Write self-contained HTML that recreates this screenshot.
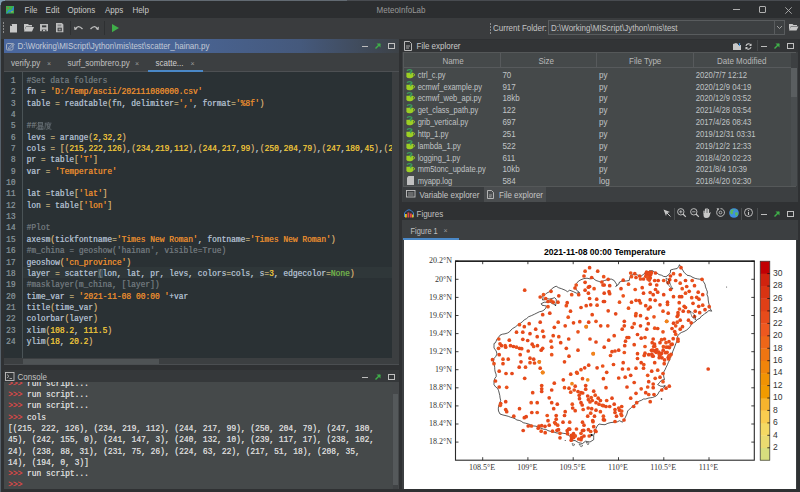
<!DOCTYPE html><html><head><meta charset="utf-8"><style>
*{margin:0;padding:0;box-sizing:border-box}
html,body{width:800px;height:492px;overflow:hidden;background:#2f3133;font-family:"Liberation Sans",sans-serif;position:relative}
.a{position:absolute}
.t{position:absolute;white-space:pre;font-family:"Liberation Sans",sans-serif;font-size:8px;line-height:10px;color:#bbbbbb;transform:translateY(0.8px) scaleY(1.12);transform-origin:0 60%}
.m{position:absolute;white-space:pre;font-family:"Liberation Mono",monospace;font-size:7.93px;line-height:11.36px;color:#a9b7c6;transform:scaleY(1.18);transform-origin:0 50%;text-shadow:0.2px 0 0 currentColor}
.k{color:#a9b7c6}.s{color:#e0892f}.n{color:#e3bf3a}.c{color:#6c7479}.g{color:#6fae4a}.o{color:#c2ad78}.p{color:#c6a46c}
.r{color:#d04848;text-shadow:0.3px 0 0 currentColor}
svg{position:absolute;overflow:visible}
</style></head><body>
<div class="a" style="left:0px;top:0px;width:347px;height:1px;background:#626a72;"></div>
<div class="a" style="left:347px;top:0px;width:453px;height:1px;background:#484b50;"></div>
<div class="a" style="left:0px;top:1px;width:1px;height:491px;background:#56616b;"></div>
<div class="a" style="left:0px;top:0px;width:5px;height:5px;background:#7f9cb4;"></div>
<div class="a" style="left:1px;top:1px;width:799px;height:17px;background:#2c2e30;border-top-left-radius:3px"></div>
<svg style="left:6px;top:6px" width="8" height="7.5" viewBox="0 0 8 7.5"><rect x="0" y="0" width="8" height="7.5" fill="#3cb04a"/><path d="M0 7.5L3 3.5L5 4.5L8 0V3L5.5 6.5L3.2 5.5L1.5 7.5Z" fill="#2f86d2"/><circle cx="2" cy="2" r="0.8" fill="#d84a3a"/><circle cx="6" cy="5.8" r="0.7" fill="#e0c030"/></svg>
<div class="t" style="left:24.6px;top:5px;color:#c9c9c9;font-size:8px;">File</div>
<div class="t" style="left:45.6px;top:5px;color:#c9c9c9;font-size:8px;">Edit</div>
<div class="t" style="left:67.6px;top:5px;color:#c9c9c9;font-size:8px;">Options</div>
<div class="t" style="left:105px;top:5px;color:#c9c9c9;font-size:8px;">Apps</div>
<div class="t" style="left:132.4px;top:5px;color:#c9c9c9;font-size:8px;">Help</div>
<div class="t" style="left:376.6px;top:5px;color:#999999;font-size:8px;">MeteoInfoLab</div>
<div class="a" style="left:733px;top:9.2px;width:6.5px;height:0.9px;background:#b0b0b0;"></div>
<div class="a" style="left:759px;top:6px;width:7px;height:7px;border:0.9px solid #b0b0b0;border-radius:1px"></div>
<svg style="left:785px;top:6.5px" width="7" height="7" viewBox="0 0 7 7"><path d="M0.3 0.3L6.7 6.7M6.7 0.3L0.3 6.7" stroke="#b0b0b0" stroke-width="0.9"/></svg>
<div class="a" style="left:1px;top:18px;width:799px;height:21px;background:#3a3c3e;"></div>
<div class="a" style="left:3px;top:22px;width:1px;height:1.5px;background:#8c8c8c;"></div>
<div class="a" style="left:3px;top:25px;width:1px;height:1.5px;background:#8c8c8c;"></div>
<div class="a" style="left:3px;top:28px;width:1px;height:1.5px;background:#8c8c8c;"></div>
<div class="a" style="left:3px;top:31px;width:1px;height:1.5px;background:#8c8c8c;"></div>
<svg style="left:10px;top:23.5px" width="7" height="8.5" viewBox="0 0 7 8.5"><path d="M2 0H7V8.5H0V2Z" fill="#c8c8c8"/><path d="M0 2L2 0V2Z" fill="#3a3c3e"/></svg>
<svg style="left:24px;top:24px" width="10" height="7.5" viewBox="0 0 10 7.5"><path d="M0 0H4L5 1H8V2.5H2L0 7.5Z" fill="#c8c8c8"/><path d="M2 3H10L8 7.5H0Z" fill="#c8c8c8"/></svg>
<svg style="left:40px;top:23.8px" width="8" height="7.2" viewBox="0 0 8 7.2"><rect x="0" y="0" width="8" height="7.2" fill="#bdbdbd"/><rect x="2" y="1.4" width="4.3" height="1.9" fill="#3a3c3e"/><rect x="1.8" y="5.6" width="4.6" height="1.6" fill="#3a3c3e"/><rect x="3" y="5.9" width="2.2" height="1.3" fill="#bdbdbd"/></svg>
<svg style="left:55.8px;top:22.8px" width="7.4" height="9.2" viewBox="0 0 7.4 9.2"><path d="M0 0H5.8L7.4 1.6V9.2H0Z" fill="#bdbdbd"/><rect x="1.6" y="1.4" width="3.6" height="1.9" fill="#8a8c8e"/><rect x="1.6" y="4.7" width="4.2" height="3.6" fill="#3a3c3e"/><rect x="2.6" y="5.6" width="2.2" height="1.8" fill="#9a9a9a"/></svg>
<div class="a" style="left:69.5px;top:21px;width:1px;height:14px;background:#2e3032;"></div>
<svg style="left:74px;top:25px" width="9" height="5" viewBox="0 0 9 5"><path d="M1 4.5Q4 -1 8.5 4" stroke="#bdbdbd" stroke-width="1.3" fill="none"/><path d="M0 1.5L0.5 5L3.5 4Z" fill="#bdbdbd"/></svg>
<svg style="left:90px;top:25px" width="9" height="5" viewBox="0 0 9 5"><path d="M8 4.5Q5 -1 0.5 4" stroke="#bdbdbd" stroke-width="1.3" fill="none"/><path d="M9 1.5L8.5 5L5.5 4Z" fill="#bdbdbd"/></svg>
<div class="a" style="left:104px;top:21px;width:1px;height:14px;background:#2e3032;"></div>
<svg style="left:111.5px;top:23.5px" width="7" height="8.2" viewBox="0 0 7 8.2"><path d="M0 0L7 4.1L0 8.2Z" fill="#3fae49"/></svg>
<div class="a" style="left:490px;top:23px;width:1px;height:1.5px;background:#8c8c8c;"></div>
<div class="a" style="left:490px;top:26px;width:1px;height:1.5px;background:#8c8c8c;"></div>
<div class="a" style="left:490px;top:29px;width:1px;height:1.5px;background:#8c8c8c;"></div>
<div class="a" style="left:490px;top:32px;width:1px;height:1.5px;background:#8c8c8c;"></div>
<div class="t" style="left:493px;top:22.5px;color:#c4c4c4;font-size:8px;">Current Folder:</div>
<div class="a" style="left:547.5px;top:20px;width:237px;height:14.5px;border:1px solid #595c5e;background:#3d4042"></div>
<div class="t" style="left:551px;top:22.5px;color:#c4c4c4;font-size:8px;">D:\Working\MIScript\Jython\mis\test</div>
<div class="a" style="left:773.5px;top:21px;width:1px;height:12.5px;background:#595c5e;"></div>
<svg style="left:776.5px;top:25.5px" width="5" height="3" viewBox="0 0 5 3"><path d="M0 0L2.5 2.5L5 0" stroke="#aaaaaa" stroke-width="0.9" fill="none"/></svg>
<svg style="left:788.5px;top:24px" width="9.5" height="6.5" viewBox="0 0 9.5 6.5"><path d="M0 0H3.5L4.5 1H8V2H2L0 6.5Z" fill="#c8c8c8"/><path d="M2 2.5H9.5L7.5 6.5H0Z" fill="#c8c8c8"/></svg>
<div class="a" style="left:4px;top:39px;width:394.6px;height:326px;background:#3c3f41;"></div>
<div class="a" style="left:4px;top:39px;width:394.6px;height:13.5px;background:linear-gradient(90deg,#4a679e 0%,#4a6698 40%,#45597c 75%,#3d4247 100%)"></div>
<svg style="left:5.6px;top:41.6px" width="8" height="8" viewBox="0 0 8 8"><rect x="0.5" y="1.5" width="6.5" height="6.5" rx="1.2" fill="none" stroke="#aeb6c2" stroke-width="0.9"/><path d="M2.5 5.8L7 1.2L8.2 2.4L3.7 6.9H2.5Z" fill="none" stroke="#aeb6c2" stroke-width="0.8"/></svg>
<div class="t" style="left:17.5px;top:41px;color:#c3cad6;font-size:8px;">D:\Working\MIScript\Jython\mis\test\scatter_hainan.py</div>
<div class="a" style="left:362px;top:46px;width:6px;height:1px;background:#bdbdbd;"></div>
<svg style="left:375px;top:43px" width="6" height="6" viewBox="0 0 6 6"><path d="M0.5 5.5L5 1" stroke="#3fae49" stroke-width="1.4"/><path d="M1.5 0.5H5.5V4.5Z" fill="#3fae49"/></svg>
<div class="a" style="left:388px;top:43.2px;width:6.6px;height:6px;border:0.9px solid #c0c0c0"></div>
<div class="a" style="left:4px;top:52.5px;width:394.6px;height:19.5px;background:#3c3f41;"></div>
<div class="t" style="left:11px;top:57.5px;color:#c0c0c0;font-size:8px;">verify.py</div>
<div class="t" style="left:47px;top:57.5px;color:#9a9a9a;font-size:7px;">×</div>
<div class="t" style="left:67.5px;top:57.5px;color:#c0c0c0;font-size:8px;">surf_sombrero.py</div>
<div class="t" style="left:135px;top:57.5px;color:#9a9a9a;font-size:7px;">×</div>
<div class="a" style="left:148px;top:52.5px;width:55px;height:19.5px;background:#3c3f41;"></div>
<div class="t" style="left:155.5px;top:57.5px;color:#d0d0d0;font-size:8px;">scatte...</div>
<div class="t" style="left:190.5px;top:57.5px;color:#9a9a9a;font-size:7px;">×</div>
<div class="a" style="left:4px;top:71px;width:394.6px;height:1px;background:#4d5053;"></div>
<div class="a" style="left:148px;top:70px;width:55px;height:2px;background:#4a88c7;"></div>
<div class="a" style="left:4px;top:72px;width:388px;height:286px;background:#2a3134;"></div>
<div class="a" style="left:4px;top:72px;width:18.4px;height:286px;background:#2a3134;"></div>
<div class="a" style="left:22px;top:72px;width:1px;height:286px;background:#4a5356;"></div>
<div class="a" style="left:23px;top:266.82px;width:369px;height:11.059999999999999px;background:#2f3739;"></div>
<div class="m" style="left:0;width:15.5px;text-align:right;top:74.80px;color:#7f8b91">1</div>
<div class="m" style="left:26.5px;top:74.80px"><span class="c">#Set data folders</span></div>
<div class="m" style="left:0;width:15.5px;text-align:right;top:86.16px;color:#7f8b91">2</div>
<div class="m" style="left:26.5px;top:86.16px"><span class="k">fn </span><span class="o">=</span><span class="k"> </span><span class="s">'D:/Temp/ascii/202111080000.csv'</span></div>
<div class="m" style="left:0;width:15.5px;text-align:right;top:97.52px;color:#7f8b91">3</div>
<div class="m" style="left:26.5px;top:97.52px"><span class="k">table </span><span class="o">=</span><span class="k"> readtable</span><span class="p">(</span><span class="k">fn, delimiter</span><span class="o">=</span><span class="s">','</span><span class="k">, format</span><span class="o">=</span><span class="s">'%8f'</span><span class="p">)</span></div>
<div class="m" style="left:0;width:15.5px;text-align:right;top:108.88px;color:#7f8b91">4</div>
<div class="m" style="left:26.5px;top:108.88px"></div>
<div class="m" style="left:0;width:15.5px;text-align:right;top:120.24px;color:#7f8b91">5</div>
<div class="m" style="left:26.5px;top:120.24px"><span class="c">##</span></div>
<div class="m" style="left:0;width:15.5px;text-align:right;top:131.60px;color:#7f8b91">6</div>
<div class="m" style="left:26.5px;top:131.60px"><span class="k">levs </span><span class="o">=</span><span class="k"> arange</span><span class="p">(</span><span class="n">2</span><span class="k">,</span><span class="n">32</span><span class="k">,</span><span class="n">2</span><span class="p">)</span></div>
<div class="m" style="left:0;width:15.5px;text-align:right;top:142.96px;color:#7f8b91">7</div>
<div class="m" style="left:26.5px;top:142.96px"><span class="k">cols </span><span class="o">=</span><span class="k"> </span><span class="p">[</span><span class="p">(</span><span class="n">215</span><span class="k">,</span><span class="n">222</span><span class="k">,</span><span class="n">126</span><span class="p">)</span><span class="k">,</span><span class="p">(</span><span class="n">234</span><span class="k">,</span><span class="n">219</span><span class="k">,</span><span class="n">112</span><span class="p">)</span><span class="k">,</span><span class="p">(</span><span class="n">244</span><span class="k">,</span><span class="n">217</span><span class="k">,</span><span class="n">99</span><span class="p">)</span><span class="k">,</span><span class="p">(</span><span class="n">250</span><span class="k">,</span><span class="n">204</span><span class="k">,</span><span class="n">79</span><span class="p">)</span><span class="k">,</span><span class="p">(</span><span class="n">247</span><span class="k">,</span><span class="n">180</span><span class="k">,</span><span class="n">45</span><span class="p">)</span><span class="k">,</span><span class="p">(</span><span class="n">2</span></div>
<div class="m" style="left:0;width:15.5px;text-align:right;top:154.32px;color:#7f8b91">8</div>
<div class="m" style="left:26.5px;top:154.32px"><span class="k">pr </span><span class="o">=</span><span class="k"> table</span><span class="p">[</span><span class="s">'T'</span><span class="p">]</span></div>
<div class="m" style="left:0;width:15.5px;text-align:right;top:165.68px;color:#7f8b91">9</div>
<div class="m" style="left:26.5px;top:165.68px"><span class="k">var </span><span class="o">=</span><span class="k"> </span><span class="s">'Temperature'</span></div>
<div class="m" style="left:0;width:15.5px;text-align:right;top:177.04px;color:#7f8b91">10</div>
<div class="m" style="left:26.5px;top:177.04px"></div>
<div class="m" style="left:0;width:15.5px;text-align:right;top:188.40px;color:#7f8b91">11</div>
<div class="m" style="left:26.5px;top:188.40px"><span class="k">lat </span><span class="o">=</span><span class="k">table</span><span class="p">[</span><span class="s">'lat'</span><span class="p">]</span></div>
<div class="m" style="left:0;width:15.5px;text-align:right;top:199.76px;color:#7f8b91">12</div>
<div class="m" style="left:26.5px;top:199.76px"><span class="k">lon </span><span class="o">=</span><span class="k"> table</span><span class="p">[</span><span class="s">'lon'</span><span class="p">]</span></div>
<div class="m" style="left:0;width:15.5px;text-align:right;top:211.12px;color:#7f8b91">13</div>
<div class="m" style="left:26.5px;top:211.12px"></div>
<div class="m" style="left:0;width:15.5px;text-align:right;top:222.48px;color:#7f8b91">14</div>
<div class="m" style="left:26.5px;top:222.48px"><span class="c">#Plot</span></div>
<div class="m" style="left:0;width:15.5px;text-align:right;top:233.84px;color:#7f8b91">15</div>
<div class="m" style="left:26.5px;top:233.84px"><span class="k">axesm</span><span class="p">(</span><span class="k">tickfontname</span><span class="o">=</span><span class="s">'Times New Roman'</span><span class="k">, fontname</span><span class="o">=</span><span class="s">'Times New Roman'</span><span class="p">)</span></div>
<div class="m" style="left:0;width:15.5px;text-align:right;top:245.20px;color:#7f8b91">16</div>
<div class="m" style="left:26.5px;top:245.20px"><span class="c">#m_china = geoshow('hainan', visible=True)</span></div>
<div class="m" style="left:0;width:15.5px;text-align:right;top:256.56px;color:#7f8b91">17</div>
<div class="m" style="left:26.5px;top:256.56px"><span class="k">geoshow</span><span class="p">(</span><span class="s">'cn_province'</span><span class="p">)</span></div>
<div class="m" style="left:0;width:15.5px;text-align:right;top:267.92px;color:#7f8b91">18</div>
<div class="m" style="left:26.5px;top:267.92px"><span class="k">layer </span><span class="o">=</span><span class="k"> scatter</span><span class="p">(</span><span class="k">lon, lat, pr, levs, colors</span><span class="o">=</span><span class="k">cols, s</span><span class="o">=</span><span class="n">3</span><span class="k">, edgecolor</span><span class="o">=</span><span class="g">None</span><span class="p">)</span></div>
<div class="m" style="left:0;width:15.5px;text-align:right;top:279.28px;color:#7f8b91">19</div>
<div class="m" style="left:26.5px;top:279.28px"><span class="c">#masklayer(m_china, [layer])</span></div>
<div class="m" style="left:0;width:15.5px;text-align:right;top:290.64px;color:#7f8b91">20</div>
<div class="m" style="left:26.5px;top:290.64px"><span class="k">time_var </span><span class="o">=</span><span class="k"> </span><span class="s">'2021-11-08 00:00 '</span><span class="k">+var</span></div>
<div class="m" style="left:0;width:15.5px;text-align:right;top:302.00px;color:#7f8b91">21</div>
<div class="m" style="left:26.5px;top:302.00px"><span class="k">title</span><span class="p">(</span><span class="k">time_var</span><span class="p">)</span></div>
<div class="m" style="left:0;width:15.5px;text-align:right;top:313.36px;color:#7f8b91">22</div>
<div class="m" style="left:26.5px;top:313.36px"><span class="k">colorbar</span><span class="p">(</span><span class="k">layer</span><span class="p">)</span></div>
<div class="m" style="left:0;width:15.5px;text-align:right;top:324.72px;color:#7f8b91">23</div>
<div class="m" style="left:26.5px;top:324.72px"><span class="k">xlim</span><span class="p">(</span><span class="n">108.2</span><span class="k">, </span><span class="n">111.5</span><span class="p">)</span></div>
<div class="m" style="left:0;width:15.5px;text-align:right;top:336.08px;color:#7f8b91">24</div>
<div class="m" style="left:26.5px;top:336.08px"><span class="k">ylim</span><span class="p">(</span><span class="n">18</span><span class="k">, </span><span class="n">20.2</span><span class="p">)</span></div>
<div class="a" style="left:98px;top:269.42px;width:4.5px;height:8.5px;background:#4a6a80;opacity:0.55"></div>
<svg style="left:36px;top:121.5px" width="16" height="7.5" viewBox="0 0 16 7.5"><g stroke="#6a7378" stroke-width="0.75" fill="none"><path d="M0.4 0.6L1.4 1.4M0.2 2.9L1.2 3.6M0.3 7.2L1.4 5"/><rect x="2.6" y="0.4" width="4" height="2.9"/><path d="M2.6 1.85H6.6"/><rect x="2.2" y="4.2" width="4.8" height="2.9"/><path d="M3.8 4.2V7.1M5.4 4.2V7.1M1.6 7.2H7.4"/><path d="M12.3 0V1M8.8 1.2H15.5M9.4 1.2Q9.4 5.5 8.6 7.4M10.2 2.8H15M11.3 2V4.3H13.9V2M10.8 5.1H14.2Q13 7 9.8 7.4M11.3 5.6Q13 7 15.4 7.4"/></g></svg>
<div class="a" style="left:392px;top:72px;width:6.6px;height:286px;background:#3c3f41;"></div>
<div class="a" style="left:4px;top:358px;width:394.6px;height:6.5px;background:#3c3f41;"></div>
<div class="a" style="left:22.5px;top:358.5px;width:136.5px;height:5px;background:#4f5355;"></div>
<div class="a" style="left:4px;top:364.3px;width:394.6px;height:0.7px;background:#4b4e51;"></div>
<div class="a" style="left:4px;top:369.6px;width:394.6px;height:119.6px;background:#45494a;"></div>
<div class="a" style="left:4px;top:369.6px;width:394.6px;height:12.8px;background:#35383a;"></div>
<svg style="left:5px;top:372px" width="9.5" height="9" viewBox="0 0 9.5 9"><rect x="0.5" y="0.5" width="8.5" height="8" fill="none" stroke="#bfbfbf" stroke-width="0.9"/><path d="M2 2.5L4 4.3L2 6" stroke="#bfbfbf" stroke-width="0.8" fill="none"/><path d="M4.5 6.5H7" stroke="#bfbfbf" stroke-width="0.8"/></svg>
<div class="t" style="left:17.5px;top:372px;color:#c2c2c2;font-size:8px;">Console</div>
<div class="a" style="left:362px;top:376.5px;width:6px;height:1px;background:#bdbdbd;"></div>
<svg style="left:375px;top:373.5px" width="6" height="6" viewBox="0 0 6 6"><path d="M0.5 5.5L5 1" stroke="#3fae49" stroke-width="1.4"/><path d="M1.5 0.5H5.5V4.5Z" fill="#3fae49"/></svg>
<div class="a" style="left:388px;top:373.7px;width:6.6px;height:6px;border:0.9px solid #c0c0c0"></div>
<div class="a" style="left:392px;top:382.4px;width:6.6px;height:106.6px;background:#45484a;"></div>
<div class="a" style="left:392.6px;top:394.3px;width:5.4px;height:90.7px;background:#55595b;"></div>
<div class="a" style="left:392.6px;top:485px;width:5.4px;height:3.8px;background:#404345;"></div>
<div class="a" style="left:4px;top:382.4px;width:388px;height:106.6px;overflow:hidden">
<div class="m" style="left:3.9px;top:-4.60px"><span class="r">&gt;&gt;&gt; </span><span style="color:#d4d4d4">run script...</span></div>
<div class="m" style="left:3.9px;top:6.70px"><span class="r">&gt;&gt;&gt; </span><span style="color:#d4d4d4">run script...</span></div>
<div class="m" style="left:3.9px;top:18.00px"><span class="r">&gt;&gt;&gt; </span><span style="color:#d4d4d4">run script...</span></div>
<div class="m" style="left:3.9px;top:29.30px"><span class="r">&gt;&gt;&gt; </span><span style="color:#d4d4d4">cols</span></div>
<div class="m" style="left:3.9px;top:40.60px"><span style="color:#d4d4d4">[(215, 222, 126), (234, 219, 112), (244, 217, 99), (250, 204, 79), (247, 180,</span></div>
<div class="m" style="left:3.9px;top:51.90px"><span style="color:#d4d4d4">45), (242, 155, 0), (241, 147, 3), (240, 132, 10), (239, 117, 17), (238, 102,</span></div>
<div class="m" style="left:3.9px;top:63.20px"><span style="color:#d4d4d4">24), (238, 88, 31), (231, 75, 26), (224, 63, 22), (217, 51, 18), (208, 35,</span></div>
<div class="m" style="left:3.9px;top:74.50px"><span style="color:#d4d4d4">14), (194, 0, 3)]</span></div>
<div class="m" style="left:3.9px;top:85.80px"><span class="r">&gt;&gt;&gt; </span><span style="color:#d4d4d4">run script...</span></div>
<div class="m" style="left:3.9px;top:97.10px"><span class="r">&gt;&gt;&gt; </span><span style="color:#d4d4d4"></span></div>
</div>
<div class="a" style="left:402px;top:39.5px;width:395.6px;height:162.5px;background:#3c3f41;"></div>
<div class="a" style="left:402px;top:39.5px;width:395.6px;height:12.4px;background:#323436;"></div>
<svg style="left:404px;top:41px" width="8" height="10" viewBox="0 0 8 10"><path d="M0.5 0.5H5.5L7.5 2.5V9.5H0.5Z" fill="none" stroke="#c8c8c8" stroke-width="0.9"/><path d="M2 5H6M2 7H5" stroke="#c8c8c8" stroke-width="0.8"/></svg>
<div class="t" style="left:416.5px;top:41px;color:#c8c8c8;font-size:8px;">File explorer</div>
<svg style="left:733px;top:43px" width="8" height="7" viewBox="0 0 8 7"><path d="M0 1L3 0L5 1V7H0Z" fill="#c8c8c8"/><rect x="5" y="2" width="3" height="5" fill="#c8c8c8"/><path d="M6.5 0V3" stroke="#3a8ad0" stroke-width="1.2"/></svg>
<svg style="left:745px;top:43px" width="7" height="7" viewBox="0 0 7 7"><path d="M1 3A2.7 2.7 0 0 1 6 2.2M6 4A2.7 2.7 0 0 1 1 4.8" stroke="#c8c8c8" stroke-width="1.1" fill="none"/><path d="M6.5 0.5V3H4Z M0.5 6.5V4H3Z" fill="#c8c8c8"/></svg>
<div class="a" style="left:756.5px;top:40px;width:1px;height:11px;background:#45484a;"></div>
<div class="a" style="left:761px;top:46px;width:6px;height:1px;background:#bdbdbd;"></div>
<svg style="left:774px;top:43px" width="6" height="6" viewBox="0 0 6 6"><path d="M0.5 5.5L5 1" stroke="#3fae49" stroke-width="1.4"/><path d="M1.5 0.5H5.5V4.5Z" fill="#3fae49"/></svg>
<div class="a" style="left:787px;top:43.2px;width:6.6px;height:6px;border:0.9px solid #c0c0c0"></div>
<div class="a" style="left:403.3px;top:51.9px;width:393.2px;height:134.7px;background:#45494a;border:1px solid #555859"></div>
<div class="a" style="left:404px;top:52.5px;width:386.5px;height:14.7px;background:#45494a;"></div>
<div class="a" style="left:404px;top:67.2px;width:386.5px;height:1px;background:#575a5c;"></div>
<div class="a" style="left:499.7px;top:52.5px;width:1px;height:14.7px;background:#575a5c;"></div>
<div class="a" style="left:596.3px;top:52.5px;width:1px;height:14.7px;background:#575a5c;"></div>
<div class="a" style="left:693px;top:52.5px;width:1px;height:14.7px;background:#575a5c;"></div>
<div class="t" style="left:442.4px;top:56px;color:#b8b8b8;font-size:8px;">Name</div>
<div class="t" style="left:538.5px;top:56px;color:#b8b8b8;font-size:8px;">Size</div>
<div class="t" style="left:629px;top:56px;color:#b8b8b8;font-size:8px;">File Type</div>
<div class="t" style="left:717px;top:56px;color:#b8b8b8;font-size:8px;">Date Modified</div>
<div class="a" style="left:790.5px;top:52.5px;width:6px;height:15.3px;background:#3d4042;"></div>
<div class="a" style="left:790.5px;top:67.8px;width:6px;height:118.3px;background:#4a4e50;"></div>
<div class="a" style="left:790.5px;top:67.8px;width:6px;height:29.5px;background:#5a5e60;"></div>
<svg style="left:406.4px;top:68.7px" width="9" height="9.5" viewBox="0 0 9 9.5"><path d="M0.4 3.8H7.1V7.3Q7.1 9.2 4.5 9.2H3Q0.4 9.2 0.4 7.3Z" fill="#9ccf24"/><circle cx="7.4" cy="5.8" r="1.15" fill="none" stroke="#9ccf24" stroke-width="1"/><path d="M0.9 1.6Q3.5 0 5.6 1.2Q6.6 2.6 4 3.3Q5.3 4 4.6 5.2" stroke="#3c9e5c" stroke-width="1.25" fill="none"/></svg>
<div class="t" style="left:417.7px;top:69.7px;color:#c0c4c6;font-size:7.5px;">ctrl_c.py</div>
<div class="t" style="left:502.4px;top:69.7px;color:#c0c4c6;font-size:8px;">70</div>
<div class="t" style="left:599px;top:69.7px;color:#c0c4c6;font-size:8px;">py</div>
<div class="t" style="left:695.8px;top:69.7px;color:#c0c4c6;font-size:7.7px;">2020/7/7 12:12</div>
<svg style="left:406.4px;top:80.54px" width="9" height="9.5" viewBox="0 0 9 9.5"><path d="M0.4 3.8H7.1V7.3Q7.1 9.2 4.5 9.2H3Q0.4 9.2 0.4 7.3Z" fill="#9ccf24"/><circle cx="7.4" cy="5.8" r="1.15" fill="none" stroke="#9ccf24" stroke-width="1"/><path d="M0.9 1.6Q3.5 0 5.6 1.2Q6.6 2.6 4 3.3Q5.3 4 4.6 5.2" stroke="#3c9e5c" stroke-width="1.25" fill="none"/></svg>
<div class="t" style="left:417.7px;top:81.54px;color:#c0c4c6;font-size:7.5px;">ecmwf_example.py</div>
<div class="t" style="left:502.4px;top:81.54px;color:#c0c4c6;font-size:8px;">917</div>
<div class="t" style="left:599px;top:81.54px;color:#c0c4c6;font-size:8px;">py</div>
<div class="t" style="left:695.8px;top:81.54px;color:#c0c4c6;font-size:7.7px;">2020/12/9 04:19</div>
<svg style="left:406.4px;top:92.38px" width="9" height="9.5" viewBox="0 0 9 9.5"><path d="M0.4 3.8H7.1V7.3Q7.1 9.2 4.5 9.2H3Q0.4 9.2 0.4 7.3Z" fill="#9ccf24"/><circle cx="7.4" cy="5.8" r="1.15" fill="none" stroke="#9ccf24" stroke-width="1"/><path d="M0.9 1.6Q3.5 0 5.6 1.2Q6.6 2.6 4 3.3Q5.3 4 4.6 5.2" stroke="#3c9e5c" stroke-width="1.25" fill="none"/></svg>
<div class="t" style="left:417.7px;top:93.38px;color:#c0c4c6;font-size:7.5px;">ecmwf_web_api.py</div>
<div class="t" style="left:502.4px;top:93.38px;color:#c0c4c6;font-size:8px;">18kb</div>
<div class="t" style="left:599px;top:93.38px;color:#c0c4c6;font-size:8px;">py</div>
<div class="t" style="left:695.8px;top:93.38px;color:#c0c4c6;font-size:7.7px;">2020/12/9 03:52</div>
<svg style="left:406.4px;top:104.22px" width="9" height="9.5" viewBox="0 0 9 9.5"><path d="M0.4 3.8H7.1V7.3Q7.1 9.2 4.5 9.2H3Q0.4 9.2 0.4 7.3Z" fill="#9ccf24"/><circle cx="7.4" cy="5.8" r="1.15" fill="none" stroke="#9ccf24" stroke-width="1"/><path d="M0.9 1.6Q3.5 0 5.6 1.2Q6.6 2.6 4 3.3Q5.3 4 4.6 5.2" stroke="#3c9e5c" stroke-width="1.25" fill="none"/></svg>
<div class="t" style="left:417.7px;top:105.22px;color:#c0c4c6;font-size:7.5px;">get_class_path.py</div>
<div class="t" style="left:502.4px;top:105.22px;color:#c0c4c6;font-size:8px;">122</div>
<div class="t" style="left:599px;top:105.22px;color:#c0c4c6;font-size:8px;">py</div>
<div class="t" style="left:695.8px;top:105.22px;color:#c0c4c6;font-size:7.7px;">2021/4/28 03:54</div>
<svg style="left:406.4px;top:116.06px" width="9" height="9.5" viewBox="0 0 9 9.5"><path d="M0.4 3.8H7.1V7.3Q7.1 9.2 4.5 9.2H3Q0.4 9.2 0.4 7.3Z" fill="#9ccf24"/><circle cx="7.4" cy="5.8" r="1.15" fill="none" stroke="#9ccf24" stroke-width="1"/><path d="M0.9 1.6Q3.5 0 5.6 1.2Q6.6 2.6 4 3.3Q5.3 4 4.6 5.2" stroke="#3c9e5c" stroke-width="1.25" fill="none"/></svg>
<div class="t" style="left:417.7px;top:117.06px;color:#c0c4c6;font-size:7.5px;">grib_vertical.py</div>
<div class="t" style="left:502.4px;top:117.06px;color:#c0c4c6;font-size:8px;">697</div>
<div class="t" style="left:599px;top:117.06px;color:#c0c4c6;font-size:8px;">py</div>
<div class="t" style="left:695.8px;top:117.06px;color:#c0c4c6;font-size:7.7px;">2017/4/26 08:43</div>
<svg style="left:406.4px;top:127.9px" width="9" height="9.5" viewBox="0 0 9 9.5"><path d="M0.4 3.8H7.1V7.3Q7.1 9.2 4.5 9.2H3Q0.4 9.2 0.4 7.3Z" fill="#9ccf24"/><circle cx="7.4" cy="5.8" r="1.15" fill="none" stroke="#9ccf24" stroke-width="1"/><path d="M0.9 1.6Q3.5 0 5.6 1.2Q6.6 2.6 4 3.3Q5.3 4 4.6 5.2" stroke="#3c9e5c" stroke-width="1.25" fill="none"/></svg>
<div class="t" style="left:417.7px;top:128.9px;color:#c0c4c6;font-size:7.5px;">http_1.py</div>
<div class="t" style="left:502.4px;top:128.9px;color:#c0c4c6;font-size:8px;">251</div>
<div class="t" style="left:599px;top:128.9px;color:#c0c4c6;font-size:8px;">py</div>
<div class="t" style="left:695.8px;top:128.9px;color:#c0c4c6;font-size:7.7px;">2019/12/31 03:31</div>
<svg style="left:406.4px;top:139.74px" width="9" height="9.5" viewBox="0 0 9 9.5"><path d="M0.4 3.8H7.1V7.3Q7.1 9.2 4.5 9.2H3Q0.4 9.2 0.4 7.3Z" fill="#9ccf24"/><circle cx="7.4" cy="5.8" r="1.15" fill="none" stroke="#9ccf24" stroke-width="1"/><path d="M0.9 1.6Q3.5 0 5.6 1.2Q6.6 2.6 4 3.3Q5.3 4 4.6 5.2" stroke="#3c9e5c" stroke-width="1.25" fill="none"/></svg>
<div class="t" style="left:417.7px;top:140.74px;color:#c0c4c6;font-size:7.5px;">lambda_1.py</div>
<div class="t" style="left:502.4px;top:140.74px;color:#c0c4c6;font-size:8px;">522</div>
<div class="t" style="left:599px;top:140.74px;color:#c0c4c6;font-size:8px;">py</div>
<div class="t" style="left:695.8px;top:140.74px;color:#c0c4c6;font-size:7.7px;">2019/12/2 12:33</div>
<svg style="left:406.4px;top:151.57999999999998px" width="9" height="9.5" viewBox="0 0 9 9.5"><path d="M0.4 3.8H7.1V7.3Q7.1 9.2 4.5 9.2H3Q0.4 9.2 0.4 7.3Z" fill="#9ccf24"/><circle cx="7.4" cy="5.8" r="1.15" fill="none" stroke="#9ccf24" stroke-width="1"/><path d="M0.9 1.6Q3.5 0 5.6 1.2Q6.6 2.6 4 3.3Q5.3 4 4.6 5.2" stroke="#3c9e5c" stroke-width="1.25" fill="none"/></svg>
<div class="t" style="left:417.7px;top:152.57999999999998px;color:#c0c4c6;font-size:7.5px;">logging_1.py</div>
<div class="t" style="left:502.4px;top:152.57999999999998px;color:#c0c4c6;font-size:8px;">611</div>
<div class="t" style="left:599px;top:152.57999999999998px;color:#c0c4c6;font-size:8px;">py</div>
<div class="t" style="left:695.8px;top:152.57999999999998px;color:#c0c4c6;font-size:7.7px;">2018/4/20 02:23</div>
<svg style="left:406.4px;top:163.42000000000002px" width="9" height="9.5" viewBox="0 0 9 9.5"><path d="M0.4 3.8H7.1V7.3Q7.1 9.2 4.5 9.2H3Q0.4 9.2 0.4 7.3Z" fill="#9ccf24"/><circle cx="7.4" cy="5.8" r="1.15" fill="none" stroke="#9ccf24" stroke-width="1"/><path d="M0.9 1.6Q3.5 0 5.6 1.2Q6.6 2.6 4 3.3Q5.3 4 4.6 5.2" stroke="#3c9e5c" stroke-width="1.25" fill="none"/></svg>
<div class="t" style="left:417.7px;top:164.42000000000002px;color:#c0c4c6;font-size:7.5px;">mm5tonc_update.py</div>
<div class="t" style="left:502.4px;top:164.42000000000002px;color:#c0c4c6;font-size:8px;">10kb</div>
<div class="t" style="left:599px;top:164.42000000000002px;color:#c0c4c6;font-size:8px;">py</div>
<div class="t" style="left:695.8px;top:164.42000000000002px;color:#c0c4c6;font-size:7.7px;">2021/8/4 10:39</div>
<svg style="left:407px;top:176.26px" width="7" height="9" viewBox="0 0 7 9"><path d="M1.5 0H7V9H0V1.5Z" fill="#c0c0c0"/></svg>
<div class="t" style="left:417.7px;top:176.26px;color:#c0c4c6;font-size:7.5px;">myapp.log</div>
<div class="t" style="left:502.4px;top:176.26px;color:#c0c4c6;font-size:8px;">584</div>
<div class="t" style="left:599px;top:176.26px;color:#c0c4c6;font-size:8px;">log</div>
<div class="t" style="left:695.8px;top:176.26px;color:#c0c4c6;font-size:7.7px;">2018/4/20 02:30</div>
<div class="a" style="left:403.3px;top:186.6px;width:393.2px;height:15.2px;background:#3c3f41;"></div>
<div class="a" style="left:403.3px;top:186.6px;width:80.6px;height:15.2px;background:#393c3e;"></div>
<div class="a" style="left:484px;top:186.6px;width:62px;height:15.2px;background:#4a4d4f;"></div>
<svg style="left:405.5px;top:190px" width="9.5" height="7.5" viewBox="0 0 9.5 7.5"><rect x="0.5" y="0.5" width="8.5" height="6.5" fill="none" stroke="#c0c0c0" stroke-width="0.9"/><path d="M2 3H7.5M2 5H7.5" stroke="#c0c0c0" stroke-width="0.7"/></svg>
<div class="t" style="left:419.5px;top:190px;color:#c4c4c4;font-size:8px;">Variable explorer</div>
<svg style="left:487px;top:189.5px" width="7" height="9" viewBox="0 0 7 9"><path d="M0.5 0.5H4.5L6.5 2.5V8.5H0.5Z" fill="none" stroke="#c0c0c0" stroke-width="0.9"/><path d="M2 5H5M2 6.8H4.5" stroke="#c0c0c0" stroke-width="0.7"/></svg>
<div class="t" style="left:499px;top:190px;color:#c4c4c4;font-size:8px;">File explorer</div>
<div class="a" style="left:402px;top:206.5px;width:395.6px;height:282.5px;background:#3c3f41;"></div>
<div class="a" style="left:402px;top:206.5px;width:395.6px;height:13.1px;background:#2f3133;"></div>
<svg style="left:404px;top:208.2px" width="10" height="10" viewBox="0 0 10 10"><path d="M0.5 9V5Q5 -1.5 9.5 5V9" stroke="#3a7fd0" stroke-width="1" fill="none"/><rect x="1" y="6" width="1.8" height="3.5" fill="#e8c020"/><rect x="3.5" y="4.5" width="1.8" height="5" fill="#e04848"/><rect x="6" y="5.5" width="1.8" height="4" fill="#e04848"/><rect x="8" y="6.5" width="1.5" height="3" fill="#e8c020"/></svg>
<div class="t" style="left:416.5px;top:209px;color:#c0c0c0;font-size:8px;">Figures</div>
<svg style="left:663px;top:209.2px" width="8" height="8" viewBox="0 0 8 8"><path d="M0.5 0.5L7 3L4 4L3 7Z" fill="#c8c8c8"/><path d="M4 4L7.5 7.5" stroke="#c8c8c8" stroke-width="1"/></svg>
<div class="a" style="left:674px;top:207.7px;width:0.8px;height:12px;background:#4a4d4f;"></div>
<svg style="left:676.5px;top:208.2px" width="9" height="9" viewBox="0 0 9 9"><circle cx="3.8" cy="3.8" r="3.2" fill="none" stroke="#c8c8c8" stroke-width="0.9"/><path d="M6 6L8.8 8.8" stroke="#c8c8c8" stroke-width="1.2"/><path d="M2.2 3.8H5.4" stroke="#c8c8c8" stroke-width="0.8"/><path d="M3.8 2.2V5.4" stroke="#c8c8c8" stroke-width="0.8"/></svg>
<svg style="left:689.5px;top:208.2px" width="9" height="9" viewBox="0 0 9 9"><circle cx="3.8" cy="3.8" r="3.2" fill="none" stroke="#c8c8c8" stroke-width="0.9"/><path d="M6 6L8.8 8.8" stroke="#c8c8c8" stroke-width="1.2"/><path d="M2.2 3.8H5.4" stroke="#c8c8c8" stroke-width="0.8"/></svg>
<svg style="left:703px;top:207.7px" width="8" height="10" viewBox="0 0 8 10"><path d="M1 5V3M2.5 5V1M4 5V0.5M5.5 5V1.5" stroke="#c8c8c8" stroke-width="1.2" stroke-linecap="round"/><path d="M0.5 5H6.5L7.8 4L6.5 8.5Q5.5 10 3 10Q0.5 10 0.5 7Z" fill="#c8c8c8"/></svg>
<svg style="left:716px;top:208.2px" width="9" height="9" viewBox="0 0 9 9"><path d="M2.2 1.4A3.9 3.9 0 1 0 4.5 0.6" stroke="#c8c8c8" stroke-width="0.9" fill="none"/><path d="M0.6 0.2L3.4 0.4L1.8 2.8Z" fill="#c8c8c8"/><circle cx="4.5" cy="4.5" r="1.4" fill="none" stroke="#c8c8c8" stroke-width="0.8"/></svg>
<svg style="left:729px;top:207.7px" width="10" height="10" viewBox="0 0 10 10"><circle cx="5" cy="5" r="4.8" fill="#3f8fe0"/><path d="M1.2 3.2Q2.5 1 4.6 1.3L5 2.6L3.6 3.4L4.2 5L2.8 6.6L1.4 5.6Z" fill="#5cb85c"/><path d="M5.8 4.6L8.6 4.2L8.9 6.5L7.2 8.6L6.4 7Z" fill="#5cb85c"/><path d="M6.3 1.2L7.8 2L6.8 2.6Z" fill="#5cb85c"/></svg>
<div class="a" style="left:741px;top:207.7px;width:0.8px;height:12px;background:#4a4d4f;"></div>
<svg style="left:744px;top:208.2px" width="9" height="9" viewBox="0 0 9 9"><circle cx="4.5" cy="4.5" r="4" fill="none" stroke="#c8c8c8" stroke-width="0.9"/><path d="M4.5 3.8V7" stroke="#c8c8c8" stroke-width="1.1"/><circle cx="4.5" cy="2.3" r="0.6" fill="#c8c8c8"/></svg>
<div class="a" style="left:756.5px;top:207.7px;width:0.8px;height:12px;background:#4a4d4f;"></div>
<div class="a" style="left:761px;top:213.7px;width:6px;height:1px;background:#bdbdbd;"></div>
<svg style="left:774px;top:210.7px" width="6" height="6" viewBox="0 0 6 6"><path d="M0.5 5.5L5 1" stroke="#3fae49" stroke-width="1.4"/><path d="M1.5 0.5H5.5V4.5Z" fill="#3fae49"/></svg>
<div class="a" style="left:787px;top:210.89999999999998px;width:6.6px;height:6px;border:0.9px solid #c0c0c0"></div>
<div class="a" style="left:402px;top:219.6px;width:395.6px;height:20.4px;background:#3c3f41;"></div>
<div class="t" style="left:410.6px;top:225.5px;color:#c0c0c0;font-size:7.4px;">Figure 1</div>
<div class="t" style="left:443.5px;top:225px;color:#9a9a9a;font-size:7px;">×</div>
<div class="a" style="left:403.3px;top:238px;width:55.5px;height:2px;background:#4a88c7;"></div>
<div class="a" style="left:403.8px;top:240px;width:392.7px;height:248.8px;background:#ffffff;"></div>
<div class="a" style="left:796.5px;top:240px;width:1.1px;height:249px;background:#2f3133;"></div>
<svg style="left:0;top:0" width="800" height="492" viewBox="0 0 800 492">
<text x="604.8" y="255.3" text-anchor="middle" font-family="Liberation Sans" font-weight="bold" font-size="8.6" fill="#000">2021-11-08 00:00 Temperature</text>
<path d="M500.0 414.0 L498.5 411.0 L498.3 408.8 L498.5 406.5 L499.6 403.5 L500.7 400.5 L500.1 398.0 L499.8 395.5 L499.2 393.0 L498.6 390.7 L497.7 388.5 L495.6 386.9 L494.0 384.7 L494.0 381.0 L494.7 378.6 L496.2 376.5 L496.1 374.2 L495.2 372.0 L494.8 369.8 L494.7 367.5 L494.4 365.1 L493.2 363.0 L493.6 360.7 L494.0 358.5 L495.8 356.4 L497.0 354.0 L496.2 351.0 L494.0 348.0 L494.0 345.8 L494.0 343.5 L495.5 342.7 L497.0 339.0 L498.6 337.2 L500.0 335.2 L502.4 334.2 L505.0 333.8 L507.5 333.0 L509.5 331.8 L511.0 330.0 L512.7 328.5 L515.5 326.8 L518.0 324.7 L520.3 323.3 L522.5 321.7 L524.3 319.8 L526.6 318.6 L528.5 316.8 L531.5 315.6 L534.5 314.2 L536.9 313.0 L539.3 311.8 L542.0 311.2 L544.1 310.0 L545.7 308.2 L546.5 306.0 L544.2 305.6 L542.0 305.2 L541.2 303.7 L544.2 302.2 L547.1 302.3 L550.0 302.0 L552.2 303.6 L554.7 304.5 L555.5 306.0 L555.9 303.8 L556.3 301.5 L556.2 299.2 L554.7 297.7 L552.0 298.5 L549.6 299.0 L547.2 298.8 L544.9 299.7 L542.5 300.0 L543.0 297.8 L542.7 295.5 L544.9 294.8 L546.5 293.2 L549.5 291.7 L551.4 289.1 L554.0 287.2 L556.2 286.2 L558.5 287.7 L561.5 288.7 L565.2 290.2 L567.5 291.7 L569.7 290.2 L573.5 291.7 L576.5 293.2 L579.5 292.5 L576.5 290.2 L575.0 287.2 L576.5 283.5 L578.4 281.2 L581.0 279.7 L583.9 278.6 L587.0 278.2 L590.0 278.9 L593.0 278.2 L596.0 280.5 L598.2 281.2 L600.4 282.0 L604.5 280.5 L607.5 279.7 L611.2 279.0 L614.2 280.5 L615.6 282.8 L617.2 285.0 L615.7 286.5 L618.7 284.2 L619.5 282.0 L621.7 281.3 L624.0 281.2 L626.6 280.9 L629.2 280.5 L629.8 277.8 L630.7 275.2 L633.3 274.6 L636.0 274.5 L638.6 275.4 L641.2 276.0 L643.2 274.6 L645.0 273.0 L647.5 272.4 L649.5 270.7 L652.5 270.7 L654.6 272.1 L657.0 273.0 L659.0 274.6 L661.5 275.2 L663.6 276.4 L666.0 276.7 L669.0 274.5 L670.4 272.5 L670.5 270.0 L673.5 269.2 L677.2 268.5 L678.6 266.7 L679.5 264.7 L681.7 268.5 L684.0 272.2 L687.0 275.2 L690.2 275.9 L693.0 277.5 L695.2 278.4 L697.4 278.9 L699.7 279.2 L702.0 279.0 L703.4 281.6 L705.0 284.2 L705.5 286.9 L706.5 289.5 L707.4 291.9 L707.0 294.6 L708.0 297.0 L708.2 300.0 L708.7 303.0 L709.3 305.2 L709.5 307.5 L711.7 311.2 L708.7 310.5 L707.2 312.3 L705.0 313.3 L703.4 315.0 L701.3 316.2 L699.9 318.3 L697.7 319.3 L696.0 321.0 L693.8 322.6 L691.5 324.0 L690.3 326.4 L688.5 328.5 L686.4 330.2 L684.0 331.5 L681.6 332.4 L679.5 333.7 L678.1 335.4 L677.2 337.5 L677.3 339.8 L676.5 342.0 L675.3 345.0 L674.2 348.0 L672.7 351.7 L672.0 354.1 L670.5 356.2 L669.7 360.0 L668.4 362.2 L667.5 364.5 L666.0 367.5 L665.0 369.8 L663.7 372.0 L663.6 374.5 L663.8 377.0 L664.5 379.5 L661.5 380.2 L659.6 382.4 L657.7 384.7 L660.7 386.2 L663.0 386.3 L665.2 385.5 L663.0 388.5 L661.2 390.1 L659.2 391.5 L658.0 394.0 L656.2 396.0 L652.5 397.5 L650.2 397.8 L648.0 398.2 L645.8 399.0 L643.5 399.0 L641.4 400.3 L639.0 401.2 L637.2 402.8 L635.2 404.2 L632.9 406.0 L630.7 408.0 L627.7 411.0 L626.9 414.1 L625.5 417.0 L624.0 420.0 L622.5 422.2 L619.5 420.7 L617.4 421.8 L615.0 422.2 L611.0 422.5 L607.9 423.3 L605.0 424.7 L602.0 424.5 L599.0 424.0 L597.2 426.0 L596.0 428.5 L594.9 430.6 L594.6 433.0 L593.7 435.2 L593.7 437.4 L593.7 439.7 L590.0 442.0 L587.8 441.6 L585.5 441.2 L582.5 443.5 L578.7 442.7 L575.0 440.5 L572.7 440.7 L570.5 441.2 L570.6 438.9 L570.5 436.7 L568.3 435.2 L566.0 433.7 L563.8 433.4 L561.5 433.0 L559.3 433.2 L557.0 433.0 L554.7 432.4 L552.6 431.5 L550.2 431.3 L548.0 430.6 L545.9 429.4 L543.5 429.2 L541.0 428.2 L538.5 427.2 L536.0 426.2 L533.3 425.9 L530.7 424.8 L528.1 423.9 L525.5 423.2 L523.2 422.7 L521.3 421.3 L519.2 420.4 L516.9 420.0 L515.0 418.7 L512.8 417.8 L510.5 417.2 L508.3 416.3 L506.0 415.7 L503.0 415.0 L500.0 414.0Z" fill="none" stroke="#000" stroke-width="0.65"/>
<circle cx="524.7" cy="290.2" r="1.85" fill="#e74b1a"/>
<circle cx="589.6" cy="267.7" r="1.85" fill="#e5471a"/>
<circle cx="585.1" cy="271.2" r="1.85" fill="#ea531d"/>
<circle cx="597.7" cy="271.2" r="1.85" fill="#e64a18"/>
<circle cx="584" cy="276" r="1.85" fill="#e74b1a"/>
<circle cx="591.7" cy="277.5" r="1.85" fill="#e5471a"/>
<circle cx="603.7" cy="276.7" r="1.85" fill="#ea531d"/>
<circle cx="585.1" cy="282.3" r="1.85" fill="#e64a18"/>
<circle cx="601.9" cy="282" r="1.85" fill="#e74b1a"/>
<circle cx="604.2" cy="285" r="1.85" fill="#e5471a"/>
<circle cx="576.2" cy="285" r="1.85" fill="#ea531d"/>
<circle cx="575" cy="288" r="1.85" fill="#e64a18"/>
<circle cx="588.4" cy="287.2" r="1.85" fill="#e74b1a"/>
<circle cx="589.6" cy="286.5" r="1.85" fill="#e5471a"/>
<circle cx="594.1" cy="288.7" r="1.85" fill="#ea531d"/>
<circle cx="585.1" cy="290.2" r="1.85" fill="#e64a18"/>
<circle cx="588.4" cy="293.2" r="1.85" fill="#e74b1a"/>
<circle cx="604.2" cy="293.2" r="1.85" fill="#e5471a"/>
<circle cx="571.7" cy="294.7" r="1.85" fill="#ea531d"/>
<circle cx="578.7" cy="294.7" r="1.85" fill="#e64a18"/>
<circle cx="551" cy="291.3" r="1.85" fill="#e74b1a"/>
<circle cx="558.8" cy="295.8" r="1.85" fill="#e5471a"/>
<circle cx="543.5" cy="294.7" r="1.85" fill="#ea531d"/>
<circle cx="540.2" cy="297" r="1.85" fill="#e64a18"/>
<circle cx="545.7" cy="298.5" r="1.85" fill="#e74b1a"/>
<circle cx="548" cy="301.5" r="1.85" fill="#e5471a"/>
<circle cx="551" cy="300.7" r="1.85" fill="#ea531d"/>
<circle cx="553.2" cy="302.2" r="1.85" fill="#e64a18"/>
<circle cx="558" cy="302.2" r="1.85" fill="#e74b1a"/>
<circle cx="567.2" cy="302.7" r="1.85" fill="#e5471a"/>
<circle cx="566.3" cy="305.7" r="1.85" fill="#ea531d"/>
<circle cx="589.6" cy="298.5" r="1.85" fill="#e64a18"/>
<circle cx="596.7" cy="299.2" r="1.85" fill="#e74b1a"/>
<circle cx="603.4" cy="301.5" r="1.85" fill="#e5471a"/>
<circle cx="548" cy="306.7" r="1.85" fill="#ea531d"/>
<circle cx="581" cy="307.5" r="1.85" fill="#e64a18"/>
<circle cx="586.2" cy="305.7" r="1.85" fill="#e74b1a"/>
<circle cx="590.7" cy="304.8" r="1.85" fill="#e5471a"/>
<circle cx="597.1" cy="305.2" r="1.85" fill="#ea531d"/>
<circle cx="570.5" cy="311.2" r="1.85" fill="#e64a18"/>
<circle cx="542.7" cy="314.7" r="1.85" fill="#e74b1a"/>
<circle cx="549.8" cy="313.2" r="1.85" fill="#e5471a"/>
<circle cx="568.2" cy="317.2" r="1.85" fill="#ea531d"/>
<circle cx="592.2" cy="314.7" r="1.85" fill="#e64a18"/>
<circle cx="529.2" cy="323.7" r="1.85" fill="#e74b1a"/>
<circle cx="540.2" cy="322.2" r="1.85" fill="#e5471a"/>
<circle cx="558.2" cy="322.2" r="1.85" fill="#ea531d"/>
<circle cx="573.5" cy="322.8" r="1.85" fill="#e64a18"/>
<circle cx="579.8" cy="321.7" r="1.85" fill="#e74b1a"/>
<circle cx="588.7" cy="322.2" r="1.85" fill="#e5471a"/>
<circle cx="596" cy="321.3" r="1.85" fill="#ea531d"/>
<circle cx="600.7" cy="325.8" r="1.85" fill="#e64a18"/>
<circle cx="565.2" cy="325.8" r="1.85" fill="#e74b1a"/>
<circle cx="586.2" cy="326.7" r="1.85" fill="#e5471a"/>
<circle cx="519.5" cy="324.7" r="1.85" fill="#ea531d"/>
<circle cx="524.3" cy="326.7" r="1.85" fill="#e64a18"/>
<circle cx="554.3" cy="327.3" r="1.85" fill="#e74b1a"/>
<circle cx="535.7" cy="329.2" r="1.85" fill="#e5471a"/>
<circle cx="542.7" cy="331.2" r="1.85" fill="#ea531d"/>
<circle cx="516.5" cy="332.2" r="1.85" fill="#e64a18"/>
<circle cx="522.8" cy="332.2" r="1.85" fill="#e74b1a"/>
<circle cx="530" cy="333.7" r="1.85" fill="#e5471a"/>
<circle cx="578" cy="331.8" r="1.85" fill="#ea531d"/>
<circle cx="553.2" cy="335.7" r="1.85" fill="#e64a18"/>
<circle cx="537.2" cy="336.7" r="1.85" fill="#e74b1a"/>
<circle cx="543.8" cy="336.7" r="1.85" fill="#e5471a"/>
<circle cx="558.8" cy="336.7" r="1.85" fill="#ea531d"/>
<circle cx="568.7" cy="339" r="1.85" fill="#e64a18"/>
<circle cx="590" cy="339" r="1.85" fill="#e74b1a"/>
<circle cx="596" cy="342" r="1.85" fill="#e5471a"/>
<circle cx="498.8" cy="339" r="1.85" fill="#ea531d"/>
<circle cx="509.3" cy="340.2" r="1.85" fill="#e64a18"/>
<circle cx="522.8" cy="339.3" r="1.85" fill="#e74b1a"/>
<circle cx="527.7" cy="340.5" r="1.85" fill="#e5471a"/>
<circle cx="551" cy="341.2" r="1.85" fill="#ea531d"/>
<circle cx="560.7" cy="342.7" r="1.85" fill="#e64a18"/>
<circle cx="500" cy="343.8" r="1.85" fill="#e74b1a"/>
<circle cx="501.5" cy="345.7" r="1.85" fill="#e5471a"/>
<circle cx="505.2" cy="345.7" r="1.85" fill="#ea531d"/>
<circle cx="505.7" cy="347.2" r="1.85" fill="#e64a18"/>
<circle cx="510.5" cy="345.7" r="1.85" fill="#e74b1a"/>
<circle cx="513.5" cy="346.5" r="1.85" fill="#e5471a"/>
<circle cx="516.5" cy="347.2" r="1.85" fill="#ea531d"/>
<circle cx="519.5" cy="348.3" r="1.85" fill="#e64a18"/>
<circle cx="521.7" cy="348.7" r="1.85" fill="#e74b1a"/>
<circle cx="532.2" cy="344.2" r="1.85" fill="#e5471a"/>
<circle cx="533.7" cy="346.5" r="1.85" fill="#ea531d"/>
<circle cx="537.5" cy="345.7" r="1.85" fill="#e64a18"/>
<circle cx="542.7" cy="348.3" r="1.85" fill="#e74b1a"/>
<circle cx="541.2" cy="350.2" r="1.85" fill="#e5471a"/>
<circle cx="551.7" cy="347.2" r="1.85" fill="#ea531d"/>
<circle cx="566.3" cy="348.3" r="1.85" fill="#e64a18"/>
<circle cx="578" cy="350.2" r="1.85" fill="#e74b1a"/>
<circle cx="604.2" cy="347.2" r="1.85" fill="#e5471a"/>
<circle cx="498.5" cy="348.3" r="1.85" fill="#ea531d"/>
<circle cx="528.2" cy="351" r="1.85" fill="#e64a18"/>
<circle cx="520.2" cy="354.7" r="1.85" fill="#e74b1a"/>
<circle cx="499.2" cy="354.7" r="1.85" fill="#e5471a"/>
<circle cx="551.7" cy="354.7" r="1.85" fill="#ea531d"/>
<circle cx="569" cy="356.2" r="1.85" fill="#e64a18"/>
<circle cx="593.2" cy="353.7" r="1.85" fill="#e74b1a"/>
<circle cx="492.5" cy="359.7" r="1.85" fill="#e5471a"/>
<circle cx="503" cy="359.2" r="1.85" fill="#ea531d"/>
<circle cx="508.2" cy="359.2" r="1.85" fill="#e64a18"/>
<circle cx="530" cy="358.2" r="1.85" fill="#e74b1a"/>
<circle cx="533.7" cy="359.2" r="1.85" fill="#e5471a"/>
<circle cx="530" cy="362.7" r="1.85" fill="#ea531d"/>
<circle cx="534.5" cy="363" r="1.85" fill="#e64a18"/>
<circle cx="539.3" cy="361.8" r="1.85" fill="#e74b1a"/>
<circle cx="521" cy="361.8" r="1.85" fill="#e5471a"/>
<circle cx="494" cy="363.7" r="1.85" fill="#ea531d"/>
<circle cx="503" cy="363.7" r="1.85" fill="#e64a18"/>
<circle cx="564.5" cy="361.8" r="1.85" fill="#e74b1a"/>
<circle cx="519.2" cy="367.2" r="1.85" fill="#e5471a"/>
<circle cx="525.5" cy="367.2" r="1.85" fill="#ea531d"/>
<circle cx="540.2" cy="368.2" r="1.85" fill="#e64a18"/>
<circle cx="588.7" cy="365.2" r="1.85" fill="#e74b1a"/>
<circle cx="584.7" cy="367.8" r="1.85" fill="#e5471a"/>
<circle cx="581" cy="369.7" r="1.85" fill="#ea531d"/>
<circle cx="576.7" cy="372.3" r="1.85" fill="#e64a18"/>
<circle cx="570.7" cy="374.2" r="1.85" fill="#e74b1a"/>
<circle cx="597.1" cy="367.8" r="1.85" fill="#e5471a"/>
<circle cx="602.7" cy="366" r="1.85" fill="#ea531d"/>
<circle cx="499.2" cy="371.2" r="1.85" fill="#e64a18"/>
<circle cx="506" cy="373.5" r="1.85" fill="#e74b1a"/>
<circle cx="512" cy="373.5" r="1.85" fill="#e5471a"/>
<circle cx="542.7" cy="372.3" r="1.85" fill="#ea531d"/>
<circle cx="635.7" cy="315.7" r="1.85" fill="#e64a18"/>
<circle cx="640.5" cy="315.7" r="1.85" fill="#e74b1a"/>
<circle cx="646.8" cy="318.3" r="1.85" fill="#e5471a"/>
<circle cx="654" cy="316.8" r="1.85" fill="#ea531d"/>
<circle cx="677.2" cy="316.5" r="1.85" fill="#e64a18"/>
<circle cx="694.5" cy="316.5" r="1.85" fill="#e74b1a"/>
<circle cx="624.3" cy="321.3" r="1.85" fill="#e5471a"/>
<circle cx="634.2" cy="323.7" r="1.85" fill="#ea531d"/>
<circle cx="648.3" cy="323.7" r="1.85" fill="#e64a18"/>
<circle cx="666.7" cy="321.3" r="1.85" fill="#e74b1a"/>
<circle cx="673.5" cy="323.2" r="1.85" fill="#e5471a"/>
<circle cx="677.2" cy="322.2" r="1.85" fill="#ea531d"/>
<circle cx="680.2" cy="320.2" r="1.85" fill="#e64a18"/>
<circle cx="688.5" cy="320.2" r="1.85" fill="#e74b1a"/>
<circle cx="691.2" cy="322.8" r="1.85" fill="#e5471a"/>
<circle cx="607.8" cy="325.8" r="1.85" fill="#ea531d"/>
<circle cx="624.3" cy="325.8" r="1.85" fill="#e64a18"/>
<circle cx="632.2" cy="327.3" r="1.85" fill="#e74b1a"/>
<circle cx="640.5" cy="325.8" r="1.85" fill="#e5471a"/>
<circle cx="675.7" cy="325.8" r="1.85" fill="#ea531d"/>
<circle cx="682.5" cy="326.7" r="1.85" fill="#e64a18"/>
<circle cx="622.2" cy="329.2" r="1.85" fill="#e74b1a"/>
<circle cx="646.8" cy="329.2" r="1.85" fill="#e5471a"/>
<circle cx="654.7" cy="328.2" r="1.85" fill="#ea531d"/>
<circle cx="657.7" cy="328.5" r="1.85" fill="#e64a18"/>
<circle cx="672" cy="328.5" r="1.85" fill="#e74b1a"/>
<circle cx="674.7" cy="331.5" r="1.85" fill="#e5471a"/>
<circle cx="663" cy="331.8" r="1.85" fill="#ea531d"/>
<circle cx="680.2" cy="329.2" r="1.85" fill="#e64a18"/>
<circle cx="614.2" cy="335.7" r="1.85" fill="#e74b1a"/>
<circle cx="637.5" cy="334.5" r="1.85" fill="#e5471a"/>
<circle cx="675.7" cy="334.2" r="1.85" fill="#ea531d"/>
<circle cx="627" cy="337.5" r="1.85" fill="#e64a18"/>
<circle cx="628.8" cy="337.5" r="1.85" fill="#e74b1a"/>
<circle cx="641.2" cy="338.2" r="1.85" fill="#e5471a"/>
<circle cx="645" cy="337.5" r="1.85" fill="#ea531d"/>
<circle cx="608.7" cy="340.2" r="1.85" fill="#e64a18"/>
<circle cx="625.5" cy="341.2" r="1.85" fill="#e74b1a"/>
<circle cx="653.2" cy="339" r="1.85" fill="#e5471a"/>
<circle cx="661.5" cy="339.7" r="1.85" fill="#ea531d"/>
<circle cx="664.5" cy="339" r="1.85" fill="#e64a18"/>
<circle cx="673.2" cy="338.7" r="1.85" fill="#e74b1a"/>
<circle cx="678" cy="339" r="1.85" fill="#e5471a"/>
<circle cx="678" cy="341.2" r="1.85" fill="#ea531d"/>
<circle cx="634.2" cy="344.7" r="1.85" fill="#e64a18"/>
<circle cx="652.2" cy="342.7" r="1.85" fill="#e74b1a"/>
<circle cx="660" cy="342.7" r="1.85" fill="#e5471a"/>
<circle cx="666" cy="342.7" r="1.85" fill="#ea531d"/>
<circle cx="669" cy="341.7" r="1.85" fill="#e64a18"/>
<circle cx="672.2" cy="344.2" r="1.85" fill="#e74b1a"/>
<circle cx="624.7" cy="345.7" r="1.85" fill="#e5471a"/>
<circle cx="645" cy="346.5" r="1.85" fill="#ea531d"/>
<circle cx="612" cy="351.7" r="1.85" fill="#e64a18"/>
<circle cx="615" cy="351" r="1.85" fill="#e74b1a"/>
<circle cx="618.7" cy="350.2" r="1.85" fill="#e5471a"/>
<circle cx="624.3" cy="352.5" r="1.85" fill="#ea531d"/>
<circle cx="637.5" cy="353.7" r="1.85" fill="#e64a18"/>
<circle cx="645" cy="353.2" r="1.85" fill="#e74b1a"/>
<circle cx="648.7" cy="354.7" r="1.85" fill="#e5471a"/>
<circle cx="610.5" cy="355.5" r="1.85" fill="#ea531d"/>
<circle cx="637.5" cy="358.5" r="1.85" fill="#e64a18"/>
<circle cx="644.2" cy="355.5" r="1.85" fill="#e74b1a"/>
<circle cx="653.2" cy="356.2" r="1.85" fill="#e5471a"/>
<circle cx="669" cy="355.5" r="1.85" fill="#ea531d"/>
<circle cx="613.5" cy="364.5" r="1.85" fill="#e64a18"/>
<circle cx="623.2" cy="362.7" r="1.85" fill="#e74b1a"/>
<circle cx="641.2" cy="362.7" r="1.85" fill="#e5471a"/>
<circle cx="643.8" cy="364.5" r="1.85" fill="#ea531d"/>
<circle cx="654.7" cy="362.7" r="1.85" fill="#e64a18"/>
<circle cx="664.2" cy="363.7" r="1.85" fill="#e74b1a"/>
<circle cx="622.5" cy="369" r="1.85" fill="#e5471a"/>
<circle cx="628.5" cy="369" r="1.85" fill="#ea531d"/>
<circle cx="636" cy="368.2" r="1.85" fill="#e64a18"/>
<circle cx="643.5" cy="368.2" r="1.85" fill="#e74b1a"/>
<circle cx="651.7" cy="371.2" r="1.85" fill="#e5471a"/>
<circle cx="657.7" cy="370.2" r="1.85" fill="#ea531d"/>
<circle cx="606.7" cy="372.3" r="1.85" fill="#e64a18"/>
<circle cx="663" cy="373.5" r="1.85" fill="#e74b1a"/>
<circle cx="708.2" cy="369" r="1.85" fill="#e5471a"/>
<circle cx="577.2" cy="373.2" r="1.85" fill="#ea531d"/>
<circle cx="524.7" cy="378.3" r="1.85" fill="#e64a18"/>
<circle cx="495.5" cy="381" r="1.85" fill="#e74b1a"/>
<circle cx="563.3" cy="379.8" r="1.85" fill="#e5471a"/>
<circle cx="582.5" cy="378.7" r="1.85" fill="#ea531d"/>
<circle cx="603.4" cy="378.7" r="1.85" fill="#e64a18"/>
<circle cx="554.3" cy="383.2" r="1.85" fill="#e74b1a"/>
<circle cx="499.2" cy="387" r="1.85" fill="#e5471a"/>
<circle cx="506.7" cy="387.3" r="1.85" fill="#ea531d"/>
<circle cx="541.7" cy="385.5" r="1.85" fill="#e64a18"/>
<circle cx="575.2" cy="386.2" r="1.85" fill="#e74b1a"/>
<circle cx="585.7" cy="385.5" r="1.85" fill="#e5471a"/>
<circle cx="564.5" cy="387.7" r="1.85" fill="#ea531d"/>
<circle cx="569" cy="388.2" r="1.85" fill="#e64a18"/>
<circle cx="541.7" cy="388.8" r="1.85" fill="#e74b1a"/>
<circle cx="551.7" cy="390" r="1.85" fill="#e5471a"/>
<circle cx="574.2" cy="390" r="1.85" fill="#ea531d"/>
<circle cx="585.7" cy="389.2" r="1.85" fill="#e64a18"/>
<circle cx="532.7" cy="392.7" r="1.85" fill="#e74b1a"/>
<circle cx="541.7" cy="391.5" r="1.85" fill="#e5471a"/>
<circle cx="570.7" cy="392.2" r="1.85" fill="#ea531d"/>
<circle cx="578" cy="391.5" r="1.85" fill="#e64a18"/>
<circle cx="581" cy="392.7" r="1.85" fill="#e74b1a"/>
<circle cx="593.7" cy="391.2" r="1.85" fill="#e5471a"/>
<circle cx="595.2" cy="395.2" r="1.85" fill="#ea531d"/>
<circle cx="579.2" cy="395.2" r="1.85" fill="#e64a18"/>
<circle cx="582.7" cy="393" r="1.85" fill="#e74b1a"/>
<circle cx="587.7" cy="396" r="1.85" fill="#e5471a"/>
<circle cx="591.2" cy="397.5" r="1.85" fill="#ea531d"/>
<circle cx="598.2" cy="398.2" r="1.85" fill="#e64a18"/>
<circle cx="549.2" cy="397.8" r="1.85" fill="#e74b1a"/>
<circle cx="579.5" cy="398.7" r="1.85" fill="#e5471a"/>
<circle cx="588.4" cy="399.7" r="1.85" fill="#ea531d"/>
<circle cx="592.2" cy="400.5" r="1.85" fill="#e64a18"/>
<circle cx="600.4" cy="400.5" r="1.85" fill="#e74b1a"/>
<circle cx="505.7" cy="401.7" r="1.85" fill="#e5471a"/>
<circle cx="531.2" cy="402.7" r="1.85" fill="#ea531d"/>
<circle cx="537.2" cy="402.7" r="1.85" fill="#e64a18"/>
<circle cx="551.7" cy="402.7" r="1.85" fill="#e74b1a"/>
<circle cx="581" cy="402.7" r="1.85" fill="#e5471a"/>
<circle cx="590" cy="402" r="1.85" fill="#ea531d"/>
<circle cx="596" cy="402.7" r="1.85" fill="#e64a18"/>
<circle cx="500.7" cy="403.5" r="1.85" fill="#e74b1a"/>
<circle cx="557.3" cy="404.2" r="1.85" fill="#e5471a"/>
<circle cx="572.3" cy="404.2" r="1.85" fill="#ea531d"/>
<circle cx="582.2" cy="405" r="1.85" fill="#e64a18"/>
<circle cx="599" cy="404.2" r="1.85" fill="#e74b1a"/>
<circle cx="603.4" cy="405.7" r="1.85" fill="#e5471a"/>
<circle cx="500.3" cy="405.3" r="1.85" fill="#ea531d"/>
<circle cx="519.5" cy="408.7" r="1.85" fill="#e64a18"/>
<circle cx="553.7" cy="408.7" r="1.85" fill="#e74b1a"/>
<circle cx="572.7" cy="408" r="1.85" fill="#e5471a"/>
<circle cx="583.2" cy="409.5" r="1.85" fill="#ea531d"/>
<circle cx="588.2" cy="408" r="1.85" fill="#e64a18"/>
<circle cx="591.7" cy="408.7" r="1.85" fill="#e74b1a"/>
<circle cx="596" cy="410.2" r="1.85" fill="#e5471a"/>
<circle cx="600.4" cy="411.7" r="1.85" fill="#ea531d"/>
<circle cx="505.7" cy="409.5" r="1.85" fill="#e64a18"/>
<circle cx="506.7" cy="411.7" r="1.85" fill="#e74b1a"/>
<circle cx="531.8" cy="412.5" r="1.85" fill="#e5471a"/>
<circle cx="537.2" cy="412.5" r="1.85" fill="#ea531d"/>
<circle cx="565.2" cy="411.7" r="1.85" fill="#e64a18"/>
<circle cx="575.2" cy="410.7" r="1.85" fill="#e74b1a"/>
<circle cx="564.5" cy="415.5" r="1.85" fill="#e5471a"/>
<circle cx="590.7" cy="413.2" r="1.85" fill="#ea531d"/>
<circle cx="513.8" cy="416.2" r="1.85" fill="#e64a18"/>
<circle cx="524.3" cy="417.7" r="1.85" fill="#e74b1a"/>
<circle cx="526.2" cy="416.7" r="1.85" fill="#e5471a"/>
<circle cx="547.2" cy="415.5" r="1.85" fill="#ea531d"/>
<circle cx="556.2" cy="415.5" r="1.85" fill="#e64a18"/>
<circle cx="587.7" cy="416.2" r="1.85" fill="#e74b1a"/>
<circle cx="594.5" cy="416.2" r="1.85" fill="#e5471a"/>
<circle cx="603.4" cy="416.2" r="1.85" fill="#ea531d"/>
<circle cx="556.2" cy="419.2" r="1.85" fill="#e64a18"/>
<circle cx="548" cy="420.7" r="1.85" fill="#e74b1a"/>
<circle cx="563" cy="422.2" r="1.85" fill="#e5471a"/>
<circle cx="569.7" cy="422.2" r="1.85" fill="#ea531d"/>
<circle cx="582.5" cy="422.2" r="1.85" fill="#e64a18"/>
<circle cx="592.7" cy="420.7" r="1.85" fill="#e74b1a"/>
<circle cx="603.4" cy="419.7" r="1.85" fill="#e5471a"/>
<circle cx="555.5" cy="423.7" r="1.85" fill="#ea531d"/>
<circle cx="549.2" cy="425.2" r="1.85" fill="#e64a18"/>
<circle cx="584" cy="425.2" r="1.85" fill="#e74b1a"/>
<circle cx="528.2" cy="426" r="1.85" fill="#e5471a"/>
<circle cx="531.5" cy="426" r="1.85" fill="#ea531d"/>
<circle cx="539" cy="426" r="1.85" fill="#e64a18"/>
<circle cx="541.7" cy="425.7" r="1.85" fill="#e74b1a"/>
<circle cx="545" cy="426.3" r="1.85" fill="#e5471a"/>
<circle cx="557.7" cy="425.2" r="1.85" fill="#ea531d"/>
<circle cx="593.7" cy="426.7" r="1.85" fill="#e64a18"/>
<circle cx="538.2" cy="428.2" r="1.85" fill="#e74b1a"/>
<circle cx="523.2" cy="430.5" r="1.85" fill="#e5471a"/>
<circle cx="541.2" cy="431.2" r="1.85" fill="#ea531d"/>
<circle cx="552.5" cy="431.2" r="1.85" fill="#e64a18"/>
<circle cx="558.5" cy="429.7" r="1.85" fill="#e74b1a"/>
<circle cx="568.7" cy="429" r="1.85" fill="#e5471a"/>
<circle cx="576.5" cy="429" r="1.85" fill="#ea531d"/>
<circle cx="582.5" cy="430.5" r="1.85" fill="#e64a18"/>
<circle cx="588.4" cy="429.7" r="1.85" fill="#e74b1a"/>
<circle cx="595.2" cy="430.7" r="1.85" fill="#e5471a"/>
<circle cx="647.7" cy="375.3" r="1.85" fill="#ea531d"/>
<circle cx="618.7" cy="378" r="1.85" fill="#e64a18"/>
<circle cx="625.2" cy="377.2" r="1.85" fill="#e74b1a"/>
<circle cx="630.7" cy="375.3" r="1.85" fill="#e5471a"/>
<circle cx="655.2" cy="378.3" r="1.85" fill="#ea531d"/>
<circle cx="660" cy="377.2" r="1.85" fill="#e64a18"/>
<circle cx="634.2" cy="382.5" r="1.85" fill="#e74b1a"/>
<circle cx="648.7" cy="381.7" r="1.85" fill="#e5471a"/>
<circle cx="663" cy="381.7" r="1.85" fill="#ea531d"/>
<circle cx="653.2" cy="384" r="1.85" fill="#e64a18"/>
<circle cx="606" cy="387.7" r="1.85" fill="#e74b1a"/>
<circle cx="627" cy="387" r="1.85" fill="#e5471a"/>
<circle cx="647.7" cy="387" r="1.85" fill="#ea531d"/>
<circle cx="653.2" cy="387.7" r="1.85" fill="#e64a18"/>
<circle cx="669.3" cy="386.2" r="1.85" fill="#e74b1a"/>
<circle cx="666" cy="388.2" r="1.85" fill="#e5471a"/>
<circle cx="641.2" cy="388.8" r="1.85" fill="#ea531d"/>
<circle cx="661.8" cy="390" r="1.85" fill="#e64a18"/>
<circle cx="636" cy="393.3" r="1.85" fill="#e74b1a"/>
<circle cx="645.7" cy="392.7" r="1.85" fill="#e5471a"/>
<circle cx="648.7" cy="394.5" r="1.85" fill="#ea531d"/>
<circle cx="654" cy="394.5" r="1.85" fill="#e64a18"/>
<circle cx="630.7" cy="398.2" r="1.85" fill="#e74b1a"/>
<circle cx="612" cy="398.2" r="1.85" fill="#e5471a"/>
<circle cx="606.7" cy="400.5" r="1.85" fill="#ea531d"/>
<circle cx="650.2" cy="401.7" r="1.85" fill="#e64a18"/>
<circle cx="636.7" cy="402.7" r="1.85" fill="#e74b1a"/>
<circle cx="614.2" cy="404.2" r="1.85" fill="#e5471a"/>
<circle cx="602.2" cy="405.3" r="1.85" fill="#ea531d"/>
<circle cx="606" cy="406.5" r="1.85" fill="#e64a18"/>
<circle cx="609.7" cy="406.5" r="1.85" fill="#e74b1a"/>
<circle cx="633.7" cy="406.5" r="1.85" fill="#e5471a"/>
<circle cx="618.7" cy="408" r="1.85" fill="#ea531d"/>
<circle cx="621.7" cy="406.5" r="1.85" fill="#e64a18"/>
<circle cx="615" cy="409.5" r="1.85" fill="#e74b1a"/>
<circle cx="619.5" cy="410.2" r="1.85" fill="#e5471a"/>
<circle cx="621.7" cy="411" r="1.85" fill="#ea531d"/>
<circle cx="615" cy="412.5" r="1.85" fill="#e64a18"/>
<circle cx="621" cy="414" r="1.85" fill="#e74b1a"/>
<circle cx="616.5" cy="416.2" r="1.85" fill="#e5471a"/>
<circle cx="621.7" cy="415.5" r="1.85" fill="#ea531d"/>
<circle cx="604.5" cy="420" r="1.85" fill="#e64a18"/>
<circle cx="615" cy="421.5" r="1.85" fill="#e74b1a"/>
<circle cx="624" cy="420" r="1.85" fill="#e5471a"/>
<circle cx="554.7" cy="422.5" r="1.85" fill="#ea531d"/>
<circle cx="593" cy="421.7" r="1.85" fill="#e64a18"/>
<circle cx="545.2" cy="432.7" r="1.85" fill="#e74b1a"/>
<circle cx="557" cy="430.3" r="1.85" fill="#e5471a"/>
<circle cx="560" cy="433.3" r="1.85" fill="#ea531d"/>
<circle cx="567.2" cy="430.7" r="1.85" fill="#e64a18"/>
<circle cx="569.7" cy="429.2" r="1.85" fill="#e74b1a"/>
<circle cx="583.7" cy="430.3" r="1.85" fill="#e5471a"/>
<circle cx="590.7" cy="431.5" r="1.85" fill="#ea531d"/>
<circle cx="596" cy="431.5" r="1.85" fill="#e64a18"/>
<circle cx="567.5" cy="433.7" r="1.85" fill="#e74b1a"/>
<circle cx="573.5" cy="433.7" r="1.85" fill="#e5471a"/>
<circle cx="581" cy="433.3" r="1.85" fill="#ea531d"/>
<circle cx="560" cy="437.8" r="1.85" fill="#e64a18"/>
<circle cx="581.7" cy="437.5" r="1.85" fill="#e74b1a"/>
<circle cx="584" cy="436" r="1.85" fill="#e5471a"/>
<circle cx="589.2" cy="436" r="1.85" fill="#ea531d"/>
<circle cx="578.7" cy="439" r="1.85" fill="#e64a18"/>
<circle cx="581" cy="439.7" r="1.85" fill="#e74b1a"/>
<circle cx="681" cy="267.7" r="1.85" fill="#e5471a"/>
<circle cx="630.7" cy="273" r="1.85" fill="#ea531d"/>
<circle cx="634.8" cy="273.7" r="1.85" fill="#e64a18"/>
<circle cx="646.5" cy="272.2" r="1.85" fill="#e74b1a"/>
<circle cx="655.5" cy="273" r="1.85" fill="#e5471a"/>
<circle cx="631.5" cy="276.7" r="1.85" fill="#ea531d"/>
<circle cx="636" cy="277.5" r="1.85" fill="#e64a18"/>
<circle cx="639.7" cy="276" r="1.85" fill="#e74b1a"/>
<circle cx="670.5" cy="276" r="1.85" fill="#e5471a"/>
<circle cx="673.5" cy="273.7" r="1.85" fill="#ea531d"/>
<circle cx="680.2" cy="274.8" r="1.85" fill="#e64a18"/>
<circle cx="608.2" cy="279.3" r="1.85" fill="#e74b1a"/>
<circle cx="623.2" cy="280.2" r="1.85" fill="#e5471a"/>
<circle cx="640.5" cy="279" r="1.85" fill="#ea531d"/>
<circle cx="643.5" cy="279" r="1.85" fill="#e64a18"/>
<circle cx="654.7" cy="280.5" r="1.85" fill="#e74b1a"/>
<circle cx="658.2" cy="280.5" r="1.85" fill="#e5471a"/>
<circle cx="663.7" cy="280.5" r="1.85" fill="#ea531d"/>
<circle cx="669.7" cy="279.7" r="1.85" fill="#e64a18"/>
<circle cx="675.7" cy="280.5" r="1.85" fill="#e74b1a"/>
<circle cx="685.5" cy="280.5" r="1.85" fill="#e5471a"/>
<circle cx="692.2" cy="280.5" r="1.85" fill="#ea531d"/>
<circle cx="702" cy="279.3" r="1.85" fill="#e64a18"/>
<circle cx="603" cy="285" r="1.85" fill="#e74b1a"/>
<circle cx="609.7" cy="285.7" r="1.85" fill="#e5471a"/>
<circle cx="628.5" cy="284.2" r="1.85" fill="#ea531d"/>
<circle cx="650.2" cy="284.2" r="1.85" fill="#e64a18"/>
<circle cx="656.7" cy="285" r="1.85" fill="#e74b1a"/>
<circle cx="668.2" cy="282.7" r="1.85" fill="#e5471a"/>
<circle cx="680.2" cy="283.2" r="1.85" fill="#ea531d"/>
<circle cx="686.7" cy="286.5" r="1.85" fill="#e64a18"/>
<circle cx="694.5" cy="285.7" r="1.85" fill="#e74b1a"/>
<circle cx="621" cy="288.7" r="1.85" fill="#e5471a"/>
<circle cx="635.2" cy="289.5" r="1.85" fill="#ea531d"/>
<circle cx="642.2" cy="287.7" r="1.85" fill="#e64a18"/>
<circle cx="655.5" cy="289.5" r="1.85" fill="#e74b1a"/>
<circle cx="670.5" cy="289.5" r="1.85" fill="#e5471a"/>
<circle cx="682.2" cy="288.7" r="1.85" fill="#ea531d"/>
<circle cx="609" cy="291.7" r="1.85" fill="#e64a18"/>
<circle cx="609.7" cy="293.7" r="1.85" fill="#e74b1a"/>
<circle cx="643.5" cy="293.2" r="1.85" fill="#e5471a"/>
<circle cx="650.2" cy="292.5" r="1.85" fill="#ea531d"/>
<circle cx="653.2" cy="294.7" r="1.85" fill="#e64a18"/>
<circle cx="657.7" cy="292.2" r="1.85" fill="#e74b1a"/>
<circle cx="663.7" cy="294.7" r="1.85" fill="#e5471a"/>
<circle cx="685.5" cy="293.2" r="1.85" fill="#ea531d"/>
<circle cx="689.2" cy="291.3" r="1.85" fill="#e64a18"/>
<circle cx="698.2" cy="292.2" r="1.85" fill="#e74b1a"/>
<circle cx="702.7" cy="294.7" r="1.85" fill="#e5471a"/>
<circle cx="623.2" cy="295.8" r="1.85" fill="#ea531d"/>
<circle cx="673.5" cy="296.7" r="1.85" fill="#e64a18"/>
<circle cx="679.5" cy="296.7" r="1.85" fill="#e74b1a"/>
<circle cx="681.7" cy="296.7" r="1.85" fill="#e5471a"/>
<circle cx="691.7" cy="297.7" r="1.85" fill="#ea531d"/>
<circle cx="696.7" cy="297.3" r="1.85" fill="#e64a18"/>
<circle cx="699" cy="299.2" r="1.85" fill="#e74b1a"/>
<circle cx="604.5" cy="301.5" r="1.85" fill="#e5471a"/>
<circle cx="619.5" cy="302.2" r="1.85" fill="#ea531d"/>
<circle cx="631.5" cy="302.2" r="1.85" fill="#e64a18"/>
<circle cx="636" cy="300.3" r="1.85" fill="#e74b1a"/>
<circle cx="639.3" cy="300.7" r="1.85" fill="#e5471a"/>
<circle cx="640.5" cy="303" r="1.85" fill="#ea531d"/>
<circle cx="650.2" cy="299.7" r="1.85" fill="#e64a18"/>
<circle cx="655.2" cy="300.3" r="1.85" fill="#e74b1a"/>
<circle cx="667.5" cy="302.2" r="1.85" fill="#e5471a"/>
<circle cx="667.5" cy="304.5" r="1.85" fill="#ea531d"/>
<circle cx="679.2" cy="302.7" r="1.85" fill="#e64a18"/>
<circle cx="693" cy="303.3" r="1.85" fill="#e74b1a"/>
<circle cx="660" cy="304.8" r="1.85" fill="#e5471a"/>
<circle cx="628.5" cy="308.2" r="1.85" fill="#ea531d"/>
<circle cx="645.7" cy="305.7" r="1.85" fill="#e64a18"/>
<circle cx="650.2" cy="307.2" r="1.85" fill="#e74b1a"/>
<circle cx="648.3" cy="309" r="1.85" fill="#e5471a"/>
<circle cx="679.5" cy="309" r="1.85" fill="#ea531d"/>
<circle cx="684.2" cy="306.3" r="1.85" fill="#e64a18"/>
<circle cx="685.5" cy="307.5" r="1.85" fill="#e74b1a"/>
<circle cx="698.7" cy="306.3" r="1.85" fill="#e5471a"/>
<circle cx="702.7" cy="305.2" r="1.85" fill="#ea531d"/>
<circle cx="709.2" cy="306.7" r="1.85" fill="#e64a18"/>
<circle cx="608.2" cy="310.8" r="1.85" fill="#e74b1a"/>
<circle cx="615.7" cy="313.8" r="1.85" fill="#e5471a"/>
<circle cx="663" cy="311.2" r="1.85" fill="#ea531d"/>
<circle cx="668.2" cy="313.2" r="1.85" fill="#e64a18"/>
<circle cx="678" cy="312.7" r="1.85" fill="#e74b1a"/>
<circle cx="683.2" cy="311.2" r="1.85" fill="#e5471a"/>
<circle cx="688.5" cy="311.7" r="1.85" fill="#ea531d"/>
<circle cx="695.2" cy="311.2" r="1.85" fill="#e64a18"/>
<circle cx="699.7" cy="312.7" r="1.85" fill="#e74b1a"/>
<circle cx="705" cy="309.7" r="1.85" fill="#e5471a"/>
<circle cx="636" cy="313.5" r="1.85" fill="#ea531d"/>
<circle cx="678" cy="315" r="1.85" fill="#e64a18"/>
<circle cx="647.4" cy="273.3" r="1.85" fill="#e74b1a"/>
<circle cx="649.4" cy="272.6" r="1.85" fill="#e5471a"/>
<circle cx="648.7" cy="275.1" r="1.85" fill="#ea531d"/>
<circle cx="645.8" cy="276.3" r="1.85" fill="#e64a18"/>
<circle cx="648" cy="279" r="1.85" fill="#e74b1a"/>
<circle cx="646.2" cy="273.9" r="1.85" fill="#e5471a"/>
<circle cx="649.3" cy="280.1" r="1.85" fill="#ea531d"/>
<circle cx="651.4" cy="272.4" r="1.85" fill="#e64a18"/>
<circle cx="650.7" cy="274.5" r="1.85" fill="#e74b1a"/>
<circle cx="649.6" cy="275.6" r="1.85" fill="#e5471a"/>
<circle cx="647.4" cy="277" r="1.85" fill="#ea531d"/>
<circle cx="650.3" cy="277.9" r="1.85" fill="#e64a18"/>
<circle cx="656.1" cy="352.3" r="1.85" fill="#e74b1a"/>
<circle cx="662" cy="357.8" r="1.85" fill="#e5471a"/>
<circle cx="666.3" cy="347.2" r="1.85" fill="#ea531d"/>
<circle cx="659.8" cy="355.6" r="1.85" fill="#e64a18"/>
<circle cx="654.2" cy="350.8" r="1.85" fill="#e74b1a"/>
<circle cx="651.8" cy="354" r="1.85" fill="#e5471a"/>
<circle cx="667.1" cy="352.3" r="1.85" fill="#ea531d"/>
<circle cx="669.4" cy="347.6" r="1.85" fill="#e64a18"/>
<circle cx="665.6" cy="352.7" r="1.85" fill="#e74b1a"/>
<circle cx="663.2" cy="350.2" r="1.85" fill="#e5471a"/>
<circle cx="668.6" cy="359" r="1.85" fill="#ea531d"/>
<circle cx="661" cy="354" r="1.85" fill="#e64a18"/>
<circle cx="664.6" cy="359.9" r="1.85" fill="#e74b1a"/>
<circle cx="668.3" cy="347.1" r="1.85" fill="#e5471a"/>
<circle cx="659.1" cy="354" r="1.85" fill="#ea531d"/>
<circle cx="651.5" cy="350.3" r="1.85" fill="#e64a18"/>
<circle cx="654.5" cy="344.1" r="1.85" fill="#e74b1a"/>
<circle cx="652.2" cy="355.8" r="1.85" fill="#e5471a"/>
<circle cx="653.7" cy="346.5" r="1.85" fill="#ea531d"/>
<circle cx="659.2" cy="357.7" r="1.85" fill="#e64a18"/>
<circle cx="652.7" cy="350.1" r="1.85" fill="#e74b1a"/>
<circle cx="668.2" cy="357.6" r="1.85" fill="#e5471a"/>
<circle cx="656.8" cy="349.5" r="1.85" fill="#ea531d"/>
<circle cx="671.1" cy="344.7" r="1.85" fill="#e64a18"/>
<circle cx="654.7" cy="346.2" r="1.85" fill="#e74b1a"/>
<circle cx="655.9" cy="350.7" r="1.85" fill="#e5471a"/>
<circle cx="663.4" cy="346.7" r="1.85" fill="#ea531d"/>
<circle cx="658.8" cy="352.2" r="1.85" fill="#e64a18"/>
<circle cx="671" cy="354.4" r="1.85" fill="#e74b1a"/>
<circle cx="661.8" cy="353.1" r="1.85" fill="#e5471a"/>
<circle cx="669.9" cy="356" r="1.85" fill="#ea531d"/>
<circle cx="573.7" cy="437.4" r="1.85" fill="#e64a18"/>
<circle cx="571.7" cy="438.8" r="1.85" fill="#e74b1a"/>
<circle cx="571.4" cy="435.4" r="1.85" fill="#e5471a"/>
<circle cx="572.5" cy="436" r="1.85" fill="#ea531d"/>
<circle cx="573.4" cy="435.3" r="1.85" fill="#e64a18"/>
<circle cx="571.7" cy="437.2" r="1.85" fill="#e74b1a"/>
<circle cx="571.2" cy="440.2" r="1.85" fill="#e5471a"/>
<circle cx="575.3" cy="435.9" r="1.85" fill="#ea531d"/>
<circle cx="572.8" cy="437.1" r="1.85" fill="#e64a18"/>
<circle cx="539.3" cy="361.8" r="1.85" fill="#f0861a"/>
<circle cx="542.7" cy="372.3" r="1.85" fill="#f0861a"/>
<circle cx="542.7" cy="372.7" r="1.85" fill="#f0861a"/>
<circle cx="587.7" cy="379.8" r="1.85" fill="#f0861a"/>
<circle cx="572" cy="383.7" r="1.85" fill="#f0861a"/>
<circle cx="666.7" cy="321.3" r="1.85" fill="#f0861a"/>
<circle cx="586.2" cy="326.7" r="1.85" fill="#f0861a"/>
<circle cx="593.2" cy="353.7" r="1.85" fill="#f0861a"/>
<path d="M590.5 434L592.5 434L592.8 436L590.8 436.3Z" fill="#111"/><path d="M572 443.5L575 444.5L573 446Z M579 444L583 445.5L581 447Z M586 442L589 443L588 445Z" fill="none" stroke="#222" stroke-width="0.5"/><path d="M666 278L669 280L671 286L673 289L670 287L667 283Z" fill="none" stroke="#111" stroke-width="0.5"/><path d="M690 311L694 314L696 320L692 317Z" fill="none" stroke="#111" stroke-width="0.5"/><circle cx="726.6" cy="287" r="0.5" fill="#333"/><circle cx="661.5" cy="399" r="0.8" fill="#111"/><circle cx="565.2" cy="440.5" r="0.5" fill="#111"/><circle cx="708" cy="369.5" r="0" fill="#111"/>
<rect x="455.5" y="261.2" width="298.8" height="199.0" fill="none" stroke="#2a2a2a" stroke-width="1.1"/>
<path d="M455.0 261.2 H754.8" stroke="#222" stroke-width="1.6"/>
<text x="482.1" y="469.6" text-anchor="middle" font-family="Liberation Serif" font-size="8" fill="#333">108.5°E</text>
<text x="527.3" y="469.6" text-anchor="middle" font-family="Liberation Serif" font-size="8" fill="#333">109°E</text>
<text x="572.6" y="469.6" text-anchor="middle" font-family="Liberation Serif" font-size="8" fill="#333">109.5°E</text>
<text x="617.9" y="469.6" text-anchor="middle" font-family="Liberation Serif" font-size="8" fill="#333">110°E</text>
<text x="663.2" y="469.6" text-anchor="middle" font-family="Liberation Serif" font-size="8" fill="#333">110.5°E</text>
<text x="708.4" y="469.6" text-anchor="middle" font-family="Liberation Serif" font-size="8" fill="#333">111°E</text>
<text x="452" y="444.3" text-anchor="end" font-family="Liberation Serif" font-size="8" fill="#333">18.2°N</text>
<text x="452" y="426.2" text-anchor="end" font-family="Liberation Serif" font-size="8" fill="#333">18.4°N</text>
<text x="452" y="408.1" text-anchor="end" font-family="Liberation Serif" font-size="8" fill="#333">18.6°N</text>
<text x="452" y="390.0" text-anchor="end" font-family="Liberation Serif" font-size="8" fill="#333">18.8°N</text>
<text x="452" y="371.9" text-anchor="end" font-family="Liberation Serif" font-size="8" fill="#333">19°N</text>
<text x="452" y="353.9" text-anchor="end" font-family="Liberation Serif" font-size="8" fill="#333">19.2°N</text>
<text x="452" y="335.8" text-anchor="end" font-family="Liberation Serif" font-size="8" fill="#333">19.4°N</text>
<text x="452" y="317.7" text-anchor="end" font-family="Liberation Serif" font-size="8" fill="#333">19.6°N</text>
<text x="452" y="299.6" text-anchor="end" font-family="Liberation Serif" font-size="8" fill="#333">19.8°N</text>
<text x="452" y="281.5" text-anchor="end" font-family="Liberation Serif" font-size="8" fill="#333">20°N</text>
<text x="452" y="263.4" text-anchor="end" font-family="Liberation Serif" font-size="8" fill="#333">20.2°N</text>
<path d="M482.7 460.2 V457.2 M482.7 261.2 V264.2 M527.9 460.2 V457.2 M527.9 261.2 V264.2 M573.2 460.2 V457.2 M573.2 261.2 V264.2 M618.5 460.2 V457.2 M618.5 261.2 V264.2 M663.8 460.2 V457.2 M663.8 261.2 V264.2 M709.0 460.2 V457.2 M709.0 261.2 V264.2 M455.5 442.1 H458.5 M754.3 442.1 H751.3 M455.5 424.0 H458.5 M754.3 424.0 H751.3 M455.5 405.9 H458.5 M754.3 405.9 H751.3 M455.5 387.8 H458.5 M754.3 387.8 H751.3 M455.5 369.7 H458.5 M754.3 369.7 H751.3 M455.5 351.7 H458.5 M754.3 351.7 H751.3 M455.5 333.6 H458.5 M754.3 333.6 H751.3 M455.5 315.5 H458.5 M754.3 315.5 H751.3 M455.5 297.4 H458.5 M754.3 297.4 H751.3 M455.5 279.3 H458.5 M754.3 279.3 H751.3 M455.5 261.2 H458.5 M754.3 261.2 H751.3" stroke="#111" stroke-width="0.8"/>
<rect x="760.2" y="447.76" width="9.6" height="12.74" fill="rgb(215, 222, 126)"/>
<rect x="760.2" y="435.32" width="9.6" height="12.74" fill="rgb(234, 219, 112)"/>
<rect x="760.2" y="422.89" width="9.6" height="12.74" fill="rgb(244, 217, 99)"/>
<rect x="760.2" y="410.45" width="9.6" height="12.74" fill="rgb(250, 204, 79)"/>
<rect x="760.2" y="398.01" width="9.6" height="12.74" fill="rgb(247, 180, 45)"/>
<rect x="760.2" y="385.57" width="9.6" height="12.74" fill="rgb(242, 155, 0)"/>
<rect x="760.2" y="373.14" width="9.6" height="12.74" fill="rgb(241, 147, 3)"/>
<rect x="760.2" y="360.70" width="9.6" height="12.74" fill="rgb(240, 132, 10)"/>
<rect x="760.2" y="348.26" width="9.6" height="12.74" fill="rgb(239, 117, 17)"/>
<rect x="760.2" y="335.82" width="9.6" height="12.74" fill="rgb(238, 102, 24)"/>
<rect x="760.2" y="323.39" width="9.6" height="12.74" fill="rgb(238, 88, 31)"/>
<rect x="760.2" y="310.95" width="9.6" height="12.74" fill="rgb(231, 75, 26)"/>
<rect x="760.2" y="298.51" width="9.6" height="12.74" fill="rgb(224, 63, 22)"/>
<rect x="760.2" y="286.07" width="9.6" height="12.74" fill="rgb(217, 51, 18)"/>
<rect x="760.2" y="273.64" width="9.6" height="12.74" fill="rgb(208, 35, 14)"/>
<rect x="760.2" y="261.20" width="9.6" height="12.74" fill="rgb(194, 0, 3)"/>
<rect x="760.2" y="261.2" width="9.6" height="199.0" fill="none" stroke="#333" stroke-width="0.7"/>
<text x="773" y="450.0" font-family="Liberation Sans" font-size="8.5" fill="#333">2</text>
<text x="773" y="437.5" font-family="Liberation Sans" font-size="8.5" fill="#333">4</text>
<text x="773" y="425.1" font-family="Liberation Sans" font-size="8.5" fill="#333">6</text>
<text x="773" y="412.6" font-family="Liberation Sans" font-size="8.5" fill="#333">8</text>
<text x="773" y="400.2" font-family="Liberation Sans" font-size="8.5" fill="#333">10</text>
<text x="773" y="387.8" font-family="Liberation Sans" font-size="8.5" fill="#333">12</text>
<text x="773" y="375.3" font-family="Liberation Sans" font-size="8.5" fill="#333">14</text>
<text x="773" y="362.9" font-family="Liberation Sans" font-size="8.5" fill="#333">16</text>
<text x="773" y="350.5" font-family="Liberation Sans" font-size="8.5" fill="#333">18</text>
<text x="773" y="338.0" font-family="Liberation Sans" font-size="8.5" fill="#333">20</text>
<text x="773" y="325.6" font-family="Liberation Sans" font-size="8.5" fill="#333">22</text>
<text x="773" y="313.1" font-family="Liberation Sans" font-size="8.5" fill="#333">24</text>
<text x="773" y="300.7" font-family="Liberation Sans" font-size="8.5" fill="#333">26</text>
<text x="773" y="288.3" font-family="Liberation Sans" font-size="8.5" fill="#333">28</text>
<text x="773" y="275.8" font-family="Liberation Sans" font-size="8.5" fill="#333">30</text>
<path d="M769.8 447.8 H767.3 M769.8 435.3 H767.3 M769.8 422.9 H767.3 M769.8 410.4 H767.3 M769.8 398.0 H767.3 M769.8 385.6 H767.3 M769.8 373.1 H767.3 M769.8 360.7 H767.3 M769.8 348.3 H767.3 M769.8 335.8 H767.3 M769.8 323.4 H767.3 M769.8 310.9 H767.3 M769.8 298.5 H767.3 M769.8 286.1 H767.3 M769.8 273.6 H767.3" stroke="#111" stroke-width="0.8"/>
</svg>
</body></html>
